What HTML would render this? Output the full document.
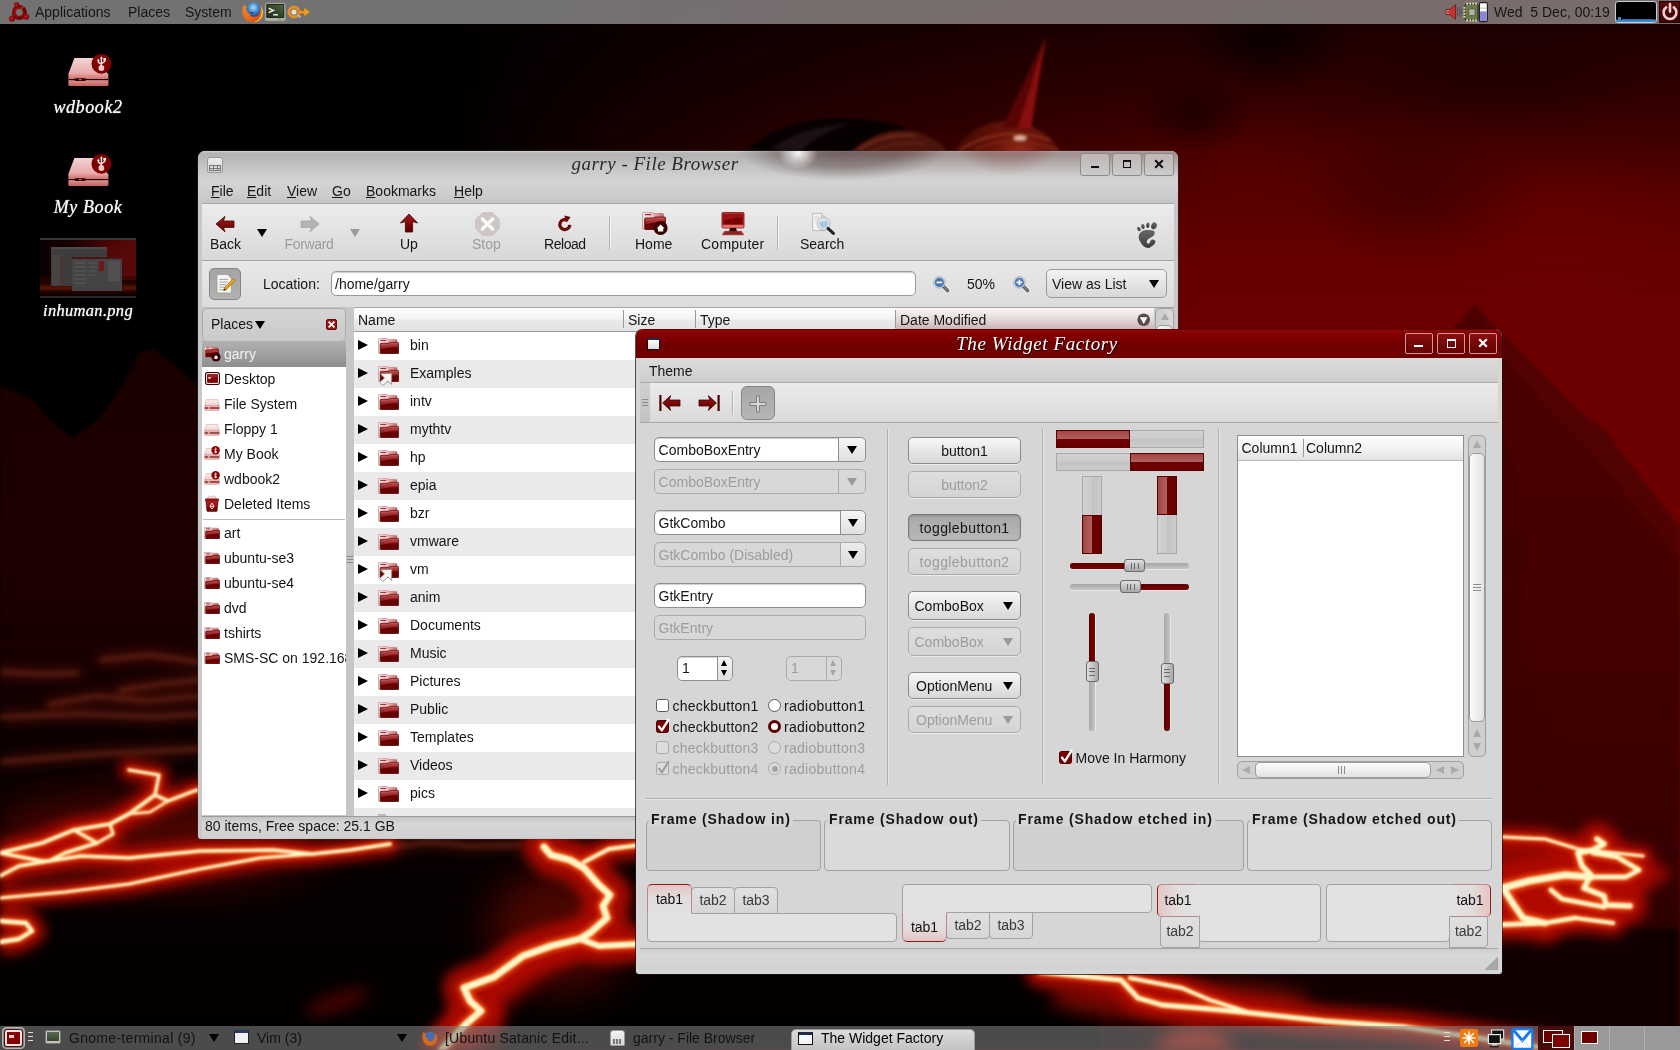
<!DOCTYPE html>
<html>
<head>
<meta charset="utf-8">
<title>desktop</title>
<style>
*{box-sizing:border-box;margin:0;padding:0}
html,body{width:1680px;height:1050px;overflow:hidden;background:#000}
body{font-family:"Liberation Sans",sans-serif;font-size:14px;color:#111;position:relative}
.abs{position:absolute}
svg{display:block}
#wall{position:absolute;left:0;top:0;width:1680px;height:1050px;overflow:hidden;background:#050000}
#wall svg{position:absolute;left:0;top:0}
.t{position:absolute;white-space:nowrap;line-height:1}
#tp{position:absolute;left:0;top:0;width:1680px;height:24px;background:linear-gradient(90deg,transparent 500px,rgba(130,60,60,.1) 900px),rgba(152,152,152,.75);box-shadow:0 1px 0 rgba(20,0,0,.6)}
#tp .t{top:5px;font-size:14px;color:#151515}
#bp{position:absolute;left:0;top:1026px;width:1680px;height:24px;background:rgba(125,125,125,.6)}
#bp .t{top:5px;font-size:14px;color:#121212}
.tri{position:absolute;width:0;height:0;border-left:5px solid transparent;border-right:5px solid transparent;border-top:8.5px solid #000}
.dlabel{position:absolute;text-align:center;font-family:"Liberation Serif",serif;font-style:italic;font-size:18px;color:#f4f4f4;letter-spacing:.6px;line-height:1;white-space:nowrap;text-shadow:0 0 1px #fff}
#fb{position:absolute;width:980px;height:688px;background:#c8c8c8;border-radius:7px 7px 3px 3px;box-shadow:0 0 0 .5px rgba(60,60,60,.6)}
#fb .t{color:#151515}
.wtitle{position:absolute;text-align:center;font-family:"Liberation Serif",serif;font-style:italic;font-size:19px;letter-spacing:.8px;line-height:1;white-space:nowrap}
.tbtn{position:absolute;width:30px;height:23px;border:1px solid #8a8a8a;border-radius:3px;background:linear-gradient(rgba(255,255,255,.35),rgba(255,255,255,.05))}
.mi{font-size:14px}
.tl{font-size:14px}
#fb .dis{color:#9c9c9c}
#wf{position:absolute;width:866px;height:645px;background:#d6d6d6;border-radius:7px 7px 3px 3px;box-shadow:-1px 0 0 rgba(30,20,20,.75),1px 0 0 rgba(30,20,20,.6),0 1px 0 rgba(30,20,20,.75)}
#wf .t{color:#151515}
#wf .dis{color:#9c9c9c}
.ent{position:absolute;border-radius:5px;background:#fff;border:1px solid #8e8e8e;box-shadow:inset 0 1px 1px #d0d0d0}
.ent.dis{background:#d8d8d8;border-color:#aaa;box-shadow:none}
.btn{position:absolute;border-radius:5px;background:linear-gradient(#f8f8f8,#e6e6e6 50%,#d8d8d8);border:1px solid #8a8a8a;box-shadow:0 1px 0 rgba(255,255,255,.5)}
.btn.dis{background:linear-gradient(#dedede,#d4d4d4);border-color:#aaa}
.btn.prs{background:linear-gradient(#a8a8a8,#b8b8b8);border-color:#7a7a7a;box-shadow:inset 0 1px 2px rgba(0,0,0,.2)}
#fb,#wf,#tp,#bp,.dlabel{will-change:transform}

</style>
</head>
<body>
<div id="wall">
<div class="abs" style="left:0;top:0;width:1680px;height:1050px;background:
linear-gradient(90deg,#000 0,#000 440px,rgba(0,0,0,.62) 650px,rgba(0,0,0,.34) 850px,rgba(0,0,0,.12) 1050px,transparent 1220px),
radial-gradient(ellipse 90px 50px at 1270px 40px,rgba(0,0,0,.7),transparent 100%),
radial-gradient(ellipse 60px 40px at 1195px 115px,rgba(0,0,0,.45),transparent 100%),
radial-gradient(ellipse 160px 60px at 1500px 80px,rgba(10,0,0,.35),transparent 100%),
radial-gradient(ellipse 120px 70px at 1420px 200px,rgba(20,0,0,.3),transparent 100%),
radial-gradient(ellipse 140px 60px at 1250px 160px,rgba(110,0,0,.3),transparent 100%),
radial-gradient(ellipse 200px 80px at 1560px 215px,rgba(120,0,0,.3),transparent 100%),
linear-gradient(180deg,#1a0000 0,#1e0000 24px,#2c0000 80px,#400000 140px,#560000 200px,#660000 260px,#6c0000 330px,#6c0000 1050px)"></div>
<svg width="1680" height="1050" viewBox="0 0 1680 1050" style="filter:blur(1.5px)">
<defs>
<linearGradient id="mtl" x1="0" y1="0" x2="0" y2="1"><stop offset="0" stop-color="#190000"/><stop offset=".6" stop-color="#1f0000"/><stop offset="1" stop-color="#120000"/></linearGradient>
<linearGradient id="mtr" x1="0" y1="0" x2="0" y2="1"><stop offset="0" stop-color="#4c0000"/><stop offset=".5" stop-color="#440000"/><stop offset=".85" stop-color="#380000"/><stop offset="1" stop-color="#2a0000"/></linearGradient>
<linearGradient id="gnd" x1="0" y1="0" x2="0" y2="1"><stop offset="0" stop-color="#1a0000"/><stop offset=".3" stop-color="#0a0000"/><stop offset="1" stop-color="#020000"/></linearGradient>
<radialGradient id="sph" cx=".6" cy=".28" r=".75"><stop offset="0" stop-color="#9a3020"/><stop offset=".25" stop-color="#6a1408"/><stop offset="1" stop-color="#260000"/></radialGradient>
</defs>
<path d="M-10 384 L0 387 L21 394 L34 401 L48 419 L72 438 L99 419 L120 389 L141 351 L154 349 L178 368 L197 385 L240 430 L300 480 L420 570 L560 650 L640 700 L-10 700 Z" fill="url(#mtl)"/>
<path d="M-10 640 L700 640 L1400 800 L1500 930 L1690 932 L1690 1060 L-10 1060 Z" fill="url(#gnd)"/>
<path d="M1340 470 L1420 380 L1452 330 L1475 304 L1500 330 L1525 356 L1568 400 L1607 433 L1640 477 L1690 540 L1690 940 L1490 940 L1340 800 Z" fill="url(#mtr)"/>
<path d="M1475 304 L1525 356 L1568 400 L1607 433 L1640 477 L1690 540 L1690 570 L1630 500 L1590 450 L1540 400 L1500 350Z" fill="#5a0404" opacity=".5"/><path d="M1500 420 L1530 520 L1520 640 L1560 760 L1540 800 L1505 700Z" fill="#3a0000" opacity=".35"/>
<path d="M1100 975 L1495 928 L1700 928 L1700 1060 L1100 1060Z" fill="#120000"/>
<path d="M730 175 Q750 128 828 118 Q905 116 948 150 L948 200 L730 200 Z" fill="#070000"/>
<path d="M770 150 Q800 126 850 124 Q820 132 800 152Z" fill="#1c1014"/>
<path d="M850 152 Q880 126 915 131 Q940 140 948 152 L948 170 L850 170Z" fill="#4a140c"/>
<path d="M858 150 Q885 132 915 136" fill="none" stroke="#8a3a20" stroke-width="2" opacity=".7"/>
<path d="M870 152 Q895 140 925 144" fill="none" stroke="#7a2a18" stroke-width="1.6" opacity=".7"/>
<circle cx="1007" cy="183" r="62" fill="url(#sph)"/>
<path d="M960 150 Q1000 124 1050 140" fill="none" stroke="#a04428" stroke-width="2.4" opacity=".6"/>
<path d="M975 150 Q1010 132 1058 150" fill="none" stroke="#8a3420" stroke-width="2" opacity=".6"/>
<ellipse cx="1020" cy="138" rx="7" ry="3" fill="#ffe0d0" opacity=".75"/>
<path d="M1002 128 L1046 36 L1031 128 Z" fill="#580404"/>
<path d="M1018 128 L1046 36 L1031 128 Z" fill="#8a0e0e"/>
<path d="M1132 972 L1142 972 L1153 1006 Z" fill="#3a2a2a"/>
</svg>
<svg width="1680" height="1050" viewBox="0 0 1680 1050" style="filter:blur(20px)">
<ellipse cx="150" cy="840" rx="170" ry="45" fill="#5a0600" opacity=".8"/>
<ellipse cx="560" cy="930" rx="70" ry="60" fill="#6a0800" opacity=".7"/>
</svg>
<svg width="1680" height="1050" viewBox="0 0 1680 1050" style="filter:blur(8px)">
<path d="M1500 830 L1680 800 L1680 1050 L1500 1050 Z" fill="#160000" opacity=".0"/>
<ellipse cx="1180" cy="1000" rx="130" ry="20" fill="#7a0a00" opacity=".8"/>
<ellipse cx="1195" cy="1052" rx="40" ry="22" fill="#e01808"/>
<path d="M425 1060 L455 1002 L500 965 L560 940 L580 950 L535 985 L505 1010 L495 1060Z" fill="#8a0600" opacity=".9"/>
<ellipse cx="338" cy="1002" rx="34" ry="7" fill="#6a0500" opacity=".8" transform="rotate(-18 338 1002)"/>
<path d="M1040 985 L1150 985 L1260 1000 L1330 1030 L1200 1025 L1100 1010Z" fill="#7a0600" opacity=".8"/>
<path d="M1495 860 L1560 850 L1610 860 L1625 890 L1590 915 L1495 920 Z" fill="#b01000"/>
</svg>
<svg width="1680" height="1050" viewBox="0 0 1680 1050" style="filter:blur(6px)">
<path d="M0 845 L74 825 L129 808 L160 790 L194 788 L170 805 L130 830 L100 850 L200 848 L200 858 L60 872 L0 884Z" fill="#7a0800" opacity=".85"/>
<path d="M1495 833 L1567 839 L1600 838 L1621 850 L1665 866 L1672 875 L1632 905 L1621 923 L1578 927 L1495 931 Z" fill="#8a0500"/>
<polyline points="0,672 40,674 78,673" fill="none" stroke="#5a1208" stroke-width="7" stroke-linejoin="round" stroke-linecap="round" opacity="1"/>
<polyline points="49,704 97,696 146,701 200,696" fill="none" stroke="#5a1208" stroke-width="7" stroke-linejoin="round" stroke-linecap="round" opacity="1"/>
<polyline points="0,717 81,714 155,717 200,714" fill="none" stroke="#5a1208" stroke-width="7" stroke-linejoin="round" stroke-linecap="round" opacity="1"/>
<polyline points="0,762 97,754 200,749" fill="none" stroke="#5a1208" stroke-width="7" stroke-linejoin="round" stroke-linecap="round" opacity="1"/>
<polyline points="100,660 150,655 200,662" fill="none" stroke="#5a1208" stroke-width="7" stroke-linejoin="round" stroke-linecap="round" opacity="1"/>
<polyline points="120,690 160,684 200,680" fill="none" stroke="#5a1208" stroke-width="7" stroke-linejoin="round" stroke-linecap="round" opacity="1"/>
<polyline points="380,851 399,846 430,842 470,846 520,845" fill="none" stroke="#5a1208" stroke-width="7" stroke-linejoin="round" stroke-linecap="round" opacity="1"/>
<polyline points="129,770 159,775 155,795 168,801 194,791 215,786" fill="none" stroke="#b00a00" stroke-width="20.2" stroke-linejoin="round" stroke-linecap="round" opacity="0.9"/>
<polyline points="155,795 129,814 110,824 74,830 42,843 0,853" fill="none" stroke="#b00a00" stroke-width="23.0" stroke-linejoin="round" stroke-linecap="round" opacity="0.9"/>
<polyline points="74,830 97,843 65,853 49,861 19,866 0,876" fill="none" stroke="#b00a00" stroke-width="21.6" stroke-linejoin="round" stroke-linecap="round" opacity="0.9"/>
<polyline points="110,824 113,834 97,843" fill="none" stroke="#b00a00" stroke-width="18.799999999999997" stroke-linejoin="round" stroke-linecap="round" opacity="0.9"/>
<polyline points="0,853 42,861 49,861 81,856 129,858 200,851 273,850 312,854 350,850 390,844" fill="none" stroke="#b00a00" stroke-width="21.6" stroke-linejoin="round" stroke-linecap="round" opacity="0.9"/>
<polyline points="0,898 65,892 129,884 200,869 260,858 312,854" fill="none" stroke="#b00a00" stroke-width="20.2" stroke-linejoin="round" stroke-linecap="round" opacity="0.9"/>
<polyline points="0,921 26,923 32,931 19,939 0,942" fill="none" stroke="#b00a00" stroke-width="27.0" stroke-linejoin="round" stroke-linecap="round" opacity="0.9"/>
<polyline points="129,814 150,812 168,801" fill="none" stroke="#b00a00" stroke-width="16.200000000000003" stroke-linejoin="round" stroke-linecap="round" opacity="0.9"/>
<polyline points="544,847 551,855 570,860 584,868 599,885 610,895 603,906 607,918 590,933 580,939 551,946 523,956 494,977 464,988 470,1001 481,1011 466,1024 440,1052" fill="none" stroke="#b00a00" stroke-width="42.0" stroke-linejoin="round" stroke-linecap="round" opacity="0.9"/>
<polyline points="584,862 609,849 640,845" fill="none" stroke="#b00a00" stroke-width="26.0" stroke-linejoin="round" stroke-linecap="round" opacity="0.9"/>
<polyline points="580,939 599,946 640,944" fill="none" stroke="#b00a00" stroke-width="36.0" stroke-linejoin="round" stroke-linecap="round" opacity="0.9"/>
<polyline points="1040,972 1081,976 1121,980 1138,998 1162,1005 1210,1009 1251,1013 1324,1021 1405,1027 1445,1033 1538,1047 1560,1052" fill="none" stroke="#b00a00" stroke-width="30.0" stroke-linejoin="round" stroke-linecap="round" opacity="0.9"/>
<polyline points="1130,978 1182,988 1210,1000 1251,1013" fill="none" stroke="#b00a00" stroke-width="24.0" stroke-linejoin="round" stroke-linecap="round" opacity="0.9"/>
<polyline points="1503,837 1545,839 1578,849 1643,856" fill="none" stroke="#b00a00" stroke-width="20.0" stroke-linejoin="round" stroke-linecap="round" opacity="0.9"/>
<polyline points="1597,839 1604,844 1593,850 1578,853 1582,866 1591,875 1584,888 1604,896 1606,905 1630,906" fill="none" stroke="#b00a00" stroke-width="34.0" stroke-linejoin="round" stroke-linecap="round" opacity="0.9"/>
<polyline points="1593,853 1617,857 1639,870 1626,877 1595,877" fill="none" stroke="#b00a00" stroke-width="30.0" stroke-linejoin="round" stroke-linecap="round" opacity="0.9"/>
<polyline points="1495,890 1529,881 1565,875 1591,877" fill="none" stroke="#b00a00" stroke-width="44.0" stroke-linejoin="round" stroke-linecap="round" opacity="0.9"/>
<polyline points="1503,888 1514,905 1523,918 1545,923" fill="none" stroke="#b00a00" stroke-width="40.0" stroke-linejoin="round" stroke-linecap="round" opacity="0.9"/>
<polyline points="1551,890 1562,899 1604,907" fill="none" stroke="#b00a00" stroke-width="30.0" stroke-linejoin="round" stroke-linecap="round" opacity="0.9"/>
<polyline points="1575,918 1613,923" fill="none" stroke="#b00a00" stroke-width="26.0" stroke-linejoin="round" stroke-linecap="round" opacity="0.9"/>
<polyline points="1495,925 1545,923 1575,918" fill="none" stroke="#b00a00" stroke-width="30.0" stroke-linejoin="round" stroke-linecap="round" opacity="0.9"/>
</svg>
<svg width="1680" height="1050" viewBox="0 0 1680 1050" style="filter:blur(2.5px)">
<polyline points="0,672 40,674 78,673" fill="none" stroke="#8a3a28" stroke-width="2" stroke-linejoin="round" stroke-linecap="round" opacity="0.8"/>
<polyline points="49,704 97,696 146,701 200,696" fill="none" stroke="#8a3a28" stroke-width="2" stroke-linejoin="round" stroke-linecap="round" opacity="0.8"/>
<polyline points="0,717 81,714 155,717 200,714" fill="none" stroke="#8a3a28" stroke-width="2" stroke-linejoin="round" stroke-linecap="round" opacity="0.8"/>
<polyline points="0,762 97,754 200,749" fill="none" stroke="#8a3a28" stroke-width="2" stroke-linejoin="round" stroke-linecap="round" opacity="0.8"/>
<polyline points="100,660 150,655 200,662" fill="none" stroke="#8a3a28" stroke-width="2" stroke-linejoin="round" stroke-linecap="round" opacity="0.8"/>
<polyline points="120,690 160,684 200,680" fill="none" stroke="#8a3a28" stroke-width="2" stroke-linejoin="round" stroke-linecap="round" opacity="0.8"/>
<polyline points="380,851 399,846 430,842 470,846 520,845" fill="none" stroke="#8a3a28" stroke-width="2" stroke-linejoin="round" stroke-linecap="round" opacity="0.8"/>
<polyline points="129,770 159,775 155,795 168,801 194,791 215,786" fill="none" stroke="#f4500e" stroke-width="5.656" stroke-linejoin="round" stroke-linecap="round" opacity="1"/>
<polyline points="155,795 129,814 110,824 74,830 42,843 0,853" fill="none" stroke="#f4500e" stroke-width="6.4399999999999995" stroke-linejoin="round" stroke-linecap="round" opacity="1"/>
<polyline points="74,830 97,843 65,853 49,861 19,866 0,876" fill="none" stroke="#f4500e" stroke-width="6.048" stroke-linejoin="round" stroke-linecap="round" opacity="1"/>
<polyline points="110,824 113,834 97,843" fill="none" stroke="#f4500e" stroke-width="5.263999999999999" stroke-linejoin="round" stroke-linecap="round" opacity="1"/>
<polyline points="0,853 42,861 49,861 81,856 129,858 200,851 273,850 312,854 350,850 390,844" fill="none" stroke="#f4500e" stroke-width="6.048" stroke-linejoin="round" stroke-linecap="round" opacity="1"/>
<polyline points="0,898 65,892 129,884 200,869 260,858 312,854" fill="none" stroke="#f4500e" stroke-width="5.656" stroke-linejoin="round" stroke-linecap="round" opacity="1"/>
<polyline points="0,921 26,923 32,931 19,939 0,942" fill="none" stroke="#f4500e" stroke-width="7.56" stroke-linejoin="round" stroke-linecap="round" opacity="1"/>
<polyline points="129,814 150,812 168,801" fill="none" stroke="#f4500e" stroke-width="4.536" stroke-linejoin="round" stroke-linecap="round" opacity="1"/>
<polyline points="544,847 551,855 570,860 584,868 599,885 610,895 603,906 607,918 590,933 580,939 551,946 523,956 494,977 464,988 470,1001 481,1011 466,1024 440,1052" fill="none" stroke="#f4500e" stroke-width="11.76" stroke-linejoin="round" stroke-linecap="round" opacity="1"/>
<polyline points="584,862 609,849 640,845" fill="none" stroke="#f4500e" stroke-width="7.279999999999999" stroke-linejoin="round" stroke-linecap="round" opacity="1"/>
<polyline points="580,939 599,946 640,944" fill="none" stroke="#f4500e" stroke-width="10.08" stroke-linejoin="round" stroke-linecap="round" opacity="1"/>
<polyline points="1040,972 1081,976 1121,980 1138,998 1162,1005 1210,1009 1251,1013 1324,1021 1405,1027 1445,1033 1538,1047 1560,1052" fill="none" stroke="#f4500e" stroke-width="8.399999999999999" stroke-linejoin="round" stroke-linecap="round" opacity="1"/>
<polyline points="1130,978 1182,988 1210,1000 1251,1013" fill="none" stroke="#f4500e" stroke-width="6.72" stroke-linejoin="round" stroke-linecap="round" opacity="1"/>
<polyline points="1503,837 1545,839 1578,849 1643,856" fill="none" stroke="#f4500e" stroke-width="5.6" stroke-linejoin="round" stroke-linecap="round" opacity="1"/>
<polyline points="1597,839 1604,844 1593,850 1578,853 1582,866 1591,875 1584,888 1604,896 1606,905 1630,906" fill="none" stroke="#f4500e" stroke-width="9.52" stroke-linejoin="round" stroke-linecap="round" opacity="1"/>
<polyline points="1593,853 1617,857 1639,870 1626,877 1595,877" fill="none" stroke="#f4500e" stroke-width="8.399999999999999" stroke-linejoin="round" stroke-linecap="round" opacity="1"/>
<polyline points="1495,890 1529,881 1565,875 1591,877" fill="none" stroke="#f4500e" stroke-width="12.32" stroke-linejoin="round" stroke-linecap="round" opacity="1"/>
<polyline points="1503,888 1514,905 1523,918 1545,923" fill="none" stroke="#f4500e" stroke-width="11.2" stroke-linejoin="round" stroke-linecap="round" opacity="1"/>
<polyline points="1551,890 1562,899 1604,907" fill="none" stroke="#f4500e" stroke-width="8.399999999999999" stroke-linejoin="round" stroke-linecap="round" opacity="1"/>
<polyline points="1575,918 1613,923" fill="none" stroke="#f4500e" stroke-width="7.279999999999999" stroke-linejoin="round" stroke-linecap="round" opacity="1"/>
<polyline points="1495,925 1545,923 1575,918" fill="none" stroke="#f4500e" stroke-width="8.399999999999999" stroke-linejoin="round" stroke-linecap="round" opacity="1"/>
</svg>
<svg width="1680" height="1050" viewBox="0 0 1680 1050" style="filter:blur(1.1px)">
<polyline points="129,770 159,775 155,795 168,801 194,791 215,786" fill="none" stroke="#fff6c4" stroke-width="3.232" stroke-linejoin="round" stroke-linecap="round" opacity="1"/>
<polyline points="155,795 129,814 110,824 74,830 42,843 0,853" fill="none" stroke="#fff6c4" stroke-width="3.6799999999999997" stroke-linejoin="round" stroke-linecap="round" opacity="1"/>
<polyline points="74,830 97,843 65,853 49,861 19,866 0,876" fill="none" stroke="#fff6c4" stroke-width="3.4560000000000004" stroke-linejoin="round" stroke-linecap="round" opacity="1"/>
<polyline points="110,824 113,834 97,843" fill="none" stroke="#fff6c4" stroke-width="3.008" stroke-linejoin="round" stroke-linecap="round" opacity="1"/>
<polyline points="0,853 42,861 49,861 81,856 129,858 200,851 273,850 312,854 350,850 390,844" fill="none" stroke="#fff6c4" stroke-width="3.4560000000000004" stroke-linejoin="round" stroke-linecap="round" opacity="1"/>
<polyline points="0,898 65,892 129,884 200,869 260,858 312,854" fill="none" stroke="#fff6c4" stroke-width="3.232" stroke-linejoin="round" stroke-linecap="round" opacity="1"/>
<polyline points="0,921 26,923 32,931 19,939 0,942" fill="none" stroke="#fff6c4" stroke-width="4.32" stroke-linejoin="round" stroke-linecap="round" opacity="1"/>
<polyline points="129,814 150,812 168,801" fill="none" stroke="#fff6c4" stroke-width="2.5920000000000005" stroke-linejoin="round" stroke-linecap="round" opacity="1"/>
<polyline points="544,847 551,855 570,860 584,868 599,885 610,895 603,906 607,918 590,933 580,939 551,946 523,956 494,977 464,988 470,1001 481,1011 466,1024 440,1052" fill="none" stroke="#fff6c4" stroke-width="6.720000000000001" stroke-linejoin="round" stroke-linecap="round" opacity="1"/>
<polyline points="584,862 609,849 640,845" fill="none" stroke="#fff6c4" stroke-width="4.16" stroke-linejoin="round" stroke-linecap="round" opacity="1"/>
<polyline points="580,939 599,946 640,944" fill="none" stroke="#fff6c4" stroke-width="5.760000000000001" stroke-linejoin="round" stroke-linecap="round" opacity="1"/>
<polyline points="1040,972 1081,976 1121,980 1138,998 1162,1005 1210,1009 1251,1013 1324,1021 1405,1027 1445,1033 1538,1047 1560,1052" fill="none" stroke="#fff6c4" stroke-width="4.800000000000001" stroke-linejoin="round" stroke-linecap="round" opacity="1"/>
<polyline points="1130,978 1182,988 1210,1000 1251,1013" fill="none" stroke="#fff6c4" stroke-width="3.84" stroke-linejoin="round" stroke-linecap="round" opacity="1"/>
<polyline points="1503,837 1545,839 1578,849 1643,856" fill="none" stroke="#fff6c4" stroke-width="3.2" stroke-linejoin="round" stroke-linecap="round" opacity="1"/>
<polyline points="1597,839 1604,844 1593,850 1578,853 1582,866 1591,875 1584,888 1604,896 1606,905 1630,906" fill="none" stroke="#fff6c4" stroke-width="5.44" stroke-linejoin="round" stroke-linecap="round" opacity="1"/>
<polyline points="1593,853 1617,857 1639,870 1626,877 1595,877" fill="none" stroke="#fff6c4" stroke-width="4.800000000000001" stroke-linejoin="round" stroke-linecap="round" opacity="1"/>
<polyline points="1495,890 1529,881 1565,875 1591,877" fill="none" stroke="#fff6c4" stroke-width="7.040000000000001" stroke-linejoin="round" stroke-linecap="round" opacity="1"/>
<polyline points="1503,888 1514,905 1523,918 1545,923" fill="none" stroke="#fff6c4" stroke-width="6.4" stroke-linejoin="round" stroke-linecap="round" opacity="1"/>
<polyline points="1551,890 1562,899 1604,907" fill="none" stroke="#fff6c4" stroke-width="4.800000000000001" stroke-linejoin="round" stroke-linecap="round" opacity="1"/>
<polyline points="1575,918 1613,923" fill="none" stroke="#fff6c4" stroke-width="4.16" stroke-linejoin="round" stroke-linecap="round" opacity="1"/>
<polyline points="1495,925 1545,923 1575,918" fill="none" stroke="#fff6c4" stroke-width="4.800000000000001" stroke-linejoin="round" stroke-linecap="round" opacity="1"/>
</svg>

</div>
<svg width="0" height="0" style="position:absolute"><defs>
<linearGradient id="drvT" x1="0" y1="0" x2="0" y2="1"><stop offset="0" stop-color="#f4d4d4"/><stop offset="1" stop-color="#e8a8a8"/></linearGradient>
<linearGradient id="drvB" x1="0" y1="0" x2="0" y2="1"><stop offset="0" stop-color="#e8a4a4"/><stop offset=".45" stop-color="#d07070"/><stop offset=".55" stop-color="#e09090"/><stop offset="1" stop-color="#c46060"/></linearGradient>
<symbol id="usbdrv" viewBox="0 0 48 36">
<path d="M8.4 4 H35 L41.4 20 H2.4 Z" fill="url(#drvT)"/>
<rect x="2.4" y="19.6" width="40" height="12.4" rx="1" fill="url(#drvB)"/>
<rect x="2.4" y="25" width="40" height="1.2" fill="#1a0000"/>
<rect x="8.4" y="24.2" width="11.6" height="2.8" rx="1.4" fill="#1a0000"/>
<rect x="13" y="25" width="2.4" height="1.2" fill="#ff6060"/>
<circle cx="35.4" cy="9.8" r="9.9" fill="#7e0000"/>
<circle cx="35.4" cy="14" r="2.9" fill="#f4c8c8"/>
<path d="M35.4 13 V3.4 M35.4 10.4 L32.4 8.4 V6.6 M35.4 9.6 L38.6 7.6 V5.8" stroke="#f8e0e0" stroke-width="1.3" fill="none"/>
<path d="M34 4.4 L35.4 2.2 L36.8 4.4Z" fill="#fff"/><rect x="37.4" y="4" width="2.6" height="2.6" fill="#fff"/><circle cx="32.4" cy="6.4" r="1.1" fill="#fff"/>
</symbol></defs></svg>
<svg class="abs" style="left:66px;top:54px" width="48" height="36"><use href="#usbdrv"/></svg>
<span class="dlabel" style="left:38px;top:98px;width:100px">wdbook2</span>
<svg class="abs" style="left:66px;top:154px" width="48" height="36"><use href="#usbdrv"/></svg>
<span class="dlabel" style="left:38px;top:198px;width:100px">My Book</span>
<!-- thumbnail -->
<div class="abs" style="left:40px;top:238px;width:96px;height:60px;overflow:hidden;background:linear-gradient(90deg,#0a0000 0,#1a0000 35%,#4a0505 70%,#5a0808 100%)">
 <div class="abs" style="left:0;top:0;width:96px;height:2px;background:#3a3434"></div>
 <div class="abs" style="left:0;top:58px;width:96px;height:2px;background:#2a2626"></div>
 <div class="abs" style="left:0;top:38px;width:96px;height:20px;background:linear-gradient(#160000,#2a0400 40%,#5a1606 60%,#200300 80%,#0a0000)"></div>
 <div class="abs" style="left:60px;top:8px;width:36px;height:34px;background:#5a0a0a;opacity:.6"></div>
 <div class="abs" style="left:11px;top:9px;width:56px;height:39px;background:#3e3c3c;border-top:2px solid #4c4a4a"></div>
 <div class="abs" style="left:12px;top:17px;width:8px;height:30px;background:#464444"></div>
 <div class="abs" style="left:21px;top:17px;width:1px;height:30px;background:#6a2a2a"></div>
 <div class="abs" style="left:32px;top:19px;width:50px;height:34px;background:#454343;border-top:2px solid #4a1414"></div>
 <div class="abs" style="left:34px;top:24px;width:12px;height:22px;background:repeating-linear-gradient(#504e4e 0,#504e4e 2px,#454343 2px,#454343 4px)"></div>
 <div class="abs" style="left:49px;top:24px;width:8px;height:14px;background:repeating-linear-gradient(#504e4e 0,#504e4e 2px,#454343 2px,#454343 4px)"></div>
 <div class="abs" style="left:59px;top:23px;width:5px;height:10px;background:#6a1a1a"></div>
 <div class="abs" style="left:68px;top:23px;width:12px;height:20px;background:#525050"></div>
</div>
<span class="dlabel" style="left:33px;top:303px;width:110px;font-size:16.5px;letter-spacing:.3px">inhuman.png</span>

<svg width="0" height="0" style="position:absolute"><defs>
<linearGradient id="fldF" x1="0" y1="0" x2="0" y2="1"><stop offset="0" stop-color="#b42828"/><stop offset=".4" stop-color="#8c0c0c"/><stop offset=".55" stop-color="#640000"/><stop offset="1" stop-color="#6e0404"/></linearGradient>
<linearGradient id="fldB" x1="0" y1="0" x2="1" y2=".3"><stop offset="0" stop-color="#fff4f4"/><stop offset=".45" stop-color="#f4c4c4"/><stop offset="1" stop-color="#c85a5a"/></linearGradient>
<symbol id="fold" viewBox="0 0 21 16">
<path d="M.4 1.2 Q.4 .3 1.3 .3 H9 L10.4 1.4 H18 Q19 1.4 19 2.4 V15.2 H.4Z" fill="url(#fldB)" stroke="#9a6a6a" stroke-width=".5"/>
<rect x="2.3" y="1.9" width="5.7" height=".9" fill="#7a1010"/>
<path d="M2.2 6.2 Q2.2 5.3 3.1 5.3 H10.4 L11.4 4.4 H19.8 Q20.8 4.4 20.8 5.4 V14.7 Q20.8 15.7 19.8 15.7 H3.2 Q2.2 15.7 2.2 14.7Z" fill="url(#fldF)" stroke="#4a0000" stroke-width=".6"/>
<path d="M3 6.2 H10.8 L11.8 5.3 H20 V8.2 Q11 8.6 3 11Z" fill="#fff" opacity=".14"/>
<path d="M3 6.3 H10.6 L11.6 5.4 H20" fill="none" stroke="#e08080" stroke-width=".5" opacity=".8"/>
</symbol>
<symbol id="foldlnk" viewBox="0 0 21 20">
<use href="#fold" x="0" y="0" width="21" height="16"/>
<path d="M2.4 7.8 L13.8 7.2 L13.6 18.4 L9.8 15.2 L4.8 19.6 L1.6 16.4 L6.4 12Z" fill="#f4f4f0" stroke="#7a7a76" stroke-width=".7"/>
</symbol>
<symbol id="sfold" viewBox="0 0 16 12">
<path d="M.4 1 Q.4 .3 1.1 .3 H6.6 L7.6 1.2 H13.6 Q14.4 1.2 14.4 2 V11.4 H.4Z" fill="url(#fldB)" stroke="#9a6a6a" stroke-width=".5"/>
<rect x="1.8" y="1.5" width="4" height=".8" fill="#7a1010"/>
<path d="M1.7 4.7 Q1.7 4 2.4 4 H7.8 L8.6 3.3 H14.9 Q15.7 3.3 15.7 4.1 V10.9 Q15.7 11.7 14.9 11.7 H2.5 Q1.7 11.7 1.7 10.9Z" fill="url(#fldF)" stroke="#4a0000" stroke-width=".6"/>
<path d="M2.4 4.8 H8 L8.8 4.1 H15 V6.2 Q8 6.6 2.4 8.2Z" fill="#fff" opacity=".14"/>
</symbol>
<linearGradient id="drvs" x1="0" y1="0" x2="0" y2="1"><stop offset="0" stop-color="#fdf2f2"/><stop offset="1" stop-color="#f2caca"/></linearGradient>
<symbol id="sdrv" viewBox="0 0 16 12">
<path d="M2.4 .6 H13.6 L15.4 7 H.6Z" fill="url(#drvs)" stroke="#c89090" stroke-width=".5"/>
<rect x=".6" y="6.8" width="14.8" height="4.6" rx=".8" fill="#f0bcbc" stroke="#c88a8a" stroke-width=".5"/>
<rect x=".8" y="8.4" width="14.4" height="1.2" fill="#6a0808"/><rect x="4" y="8.4" width="2" height="1.2" fill="#f4d0d0"/>
</symbol>
<symbol id="susb" viewBox="0 0 16 14">
<use href="#sdrv" x="0" y="2" width="16" height="12"/>
<circle cx="11.6" cy="4.2" r="4.2" fill="#8a0000"/><circle cx="11.6" cy="6" r="1.3" fill="#f8d8d8"/><path d="M11.6 5.4 V1.4 M11.6 4.2 L10.2 3.2 M11.6 3.8 L13 2.8" stroke="#fff" stroke-width=".7" fill="none"/>
</symbol>
</defs></svg>
<div id="fb" style="left:198px;top:151px">
<div class="abs" style="left:0;top:0;width:980px;height:53px;border-radius:7px 7px 0 0;background:linear-gradient(#d4d4d4 0,#b4b4b4 2px,#b6b6b6 6px,#c4c4c4 15px,#cfcfcf 25px,#d3d3d3 33px,#cdcdcd 44px,#c4c4c4 52px)"></div>
<div class="abs" style="left:0;top:0;width:980px;height:30px;border-radius:7px 7px 0 0;overflow:hidden">
<div class="abs" style="left:560px;top:0;width:420px;height:28px;background:linear-gradient(rgba(100,30,30,.26),rgba(100,30,30,.12) 12px,transparent 26px);-webkit-mask-image:linear-gradient(90deg,transparent,#000 80px)"></div>
<div class="abs" style="left:536px;top:-40px;width:216px;height:70px;border-radius:50%;background:radial-gradient(ellipse 108px 35px at 50% 50%,rgba(40,20,20,.42),rgba(40,20,20,.3) 60%,transparent 100%)"></div>
<div class="abs" style="left:650px;top:-10px;width:100px;height:30px;background:radial-gradient(ellipse 50px 22px at 50% 0,rgba(120,40,30,.3),transparent 100%)"></div>
<div class="abs" style="left:578px;top:-6px;width:44px;height:30px;background:radial-gradient(ellipse 20px 17px at 50% 25%,rgba(255,255,255,.95),rgba(255,255,255,.5) 50%,transparent 100%)"></div>
<div class="abs" style="left:745px;top:-32px;width:128px;height:62px;background:radial-gradient(ellipse 64px 56px at 50% 0,rgba(120,50,40,.5),rgba(120,50,40,.25) 70%,transparent 100%)"></div>
</div>
<div class="abs" style="left:9px;top:6px;width:16px;height:16px;border:1px solid #999;border-radius:3px 3px 2px 2px;background:linear-gradient(#eee,#d4d4d4)"></div>
<div class="abs" style="left:11px;top:14px;width:12px;height:6px;background:#777"></div>
<div class="abs" style="left:12px;top:15px;width:10px;height:4px;background:repeating-linear-gradient(90deg,#ddd 0,#ddd 3px,#777 3px,#777 4px)"></div>
<div class="abs" style="left:12px;top:16.599999999999994px;width:10px;height:1px;background:#777"></div>
<span class="wtitle" style="left:342px;top:3px;width:230px;letter-spacing:.5px;color:#2a2a2a">garry - File Browser</span>
<div class="tbtn" style="left:882px;top:2px"></div>
<div class="tbtn" style="left:914px;top:2px"></div>
<div class="tbtn" style="left:946px;top:2px"></div>
<div class="abs" style="left:893px;top:15px;width:8px;height:2px;background:#111"></div>
<div class="abs" style="left:925px;top:9px;width:8px;height:8px;border:1px solid #111;border-top:2px solid #111"></div>
<svg class="abs" style="left:956px;top:8px" width="10" height="10" viewBox="0 0 10 10"><path d="M1.2 1.2 L8.8 8.8 M8.8 1.2 L1.2 8.8" stroke="#111" stroke-width="2"/></svg>
<span class="t mi" style="left:13px;top:33px"><u>F</u>ile</span>
<span class="t mi" style="left:49px;top:33px"><u>E</u>dit</span>
<span class="t mi" style="left:89px;top:33px"><u>V</u>iew</span>
<span class="t mi" style="left:134px;top:33px"><u>G</u>o</span>
<span class="t mi" style="left:168px;top:33px"><u>B</u>ookmarks</span>
<span class="t mi" style="left:256px;top:33px"><u>H</u>elp</span>
<div class="abs" style="left:4px;top:52px;width:972px;height:58px;background:linear-gradient(#ececec,#e0e0e0 60%,#d8d8d8);border-top:1px solid #a8a8a8;border-bottom:1px solid #a4a4a4"></div>
<svg class="abs" style="left:17px;top:64px" width="20" height="18" viewBox="0 0 20 18"><defs><linearGradient id="arR" x1="0" y1="0" x2="0" y2="1"><stop offset="0" stop-color="#a81818"/><stop offset="1" stop-color="#5a0000"/></linearGradient></defs><path d="M1 9 L10 1.4 L8.4 6 H19 V12.4 H8.4 L10 16.8Z" fill="url(#arR)" stroke="#4a0000" stroke-width=".8" stroke-linejoin="round"/></svg>
<span class="t tl" style="left:12px;top:86px">Back</span>
<div class="tri" style="left:59px;top:78px"></div>
<svg class="abs" style="left:102px;top:64px" width="20" height="18" viewBox="0 0 20 18"><path d="M19 9 L10 1.4 L11.6 6 H1 V12.4 H11.6 L10 16.8Z" fill="#b4b4b4" stroke="#a4a4a4" stroke-width=".8" stroke-linejoin="round"/></svg>
<span class="t tl dis" style="left:86.5px;top:86px;letter-spacing:-.35px">Forward</span>
<div class="tri" style="left:152px;top:78px;border-top-color:#999"></div>
<svg class="abs" style="left:201px;top:62px" width="20" height="20" viewBox="0 0 20 20"><path d="M10 1 L18.6 10 L13.6 8.6 V19 H6.4 V8.6 L1.4 10Z" fill="url(#arR)" stroke="#4a0000" stroke-width=".8" stroke-linejoin="round"/></svg>
<span class="t tl" style="left:202px;top:86px">Up</span>
<svg class="abs" style="left:277px;top:61px" width="25" height="24" viewBox="0 0 25 24"><path d="M7.6 .8 H17.4 L24.2 7.6 V16.4 L17.4 23.2 H7.6 L.8 16.4 V7.6Z" fill="#cfc6c6" stroke="#c4baba" stroke-width=".8"/><path d="M7.4 7 L17.6 17 M17.6 7 L7.4 17" stroke="#fafafa" stroke-width="3.6" stroke-linecap="round"/></svg>
<span class="t tl dis" style="left:274px;top:86px">Stop</span>
<svg class="abs" style="left:359px;top:63px" width="16" height="18" viewBox="0 0 16 18"><path d="M10.6 6.4 A5 5 0 1 0 12.8 10.8" fill="none" stroke="#6a0606" stroke-width="3.2"/><path d="M7.2 1.6 L13.6 3 L9.6 8.4Z" fill="#6a0606"/></svg>
<span class="t tl" style="left:346px;top:86px;letter-spacing:-.45px">Reload</span>
<div class="abs" style="left:411px;top:65px;width:1px;height:34px;background:#b4b4b4;box-shadow:1px 0 0 #f4f4f4"></div>
<svg class="abs" style="left:444px;top:61px" width="27" height="24" viewBox="0 0 27 24"><use href="#fold" x="0" y="0" width="24" height="18"/><circle cx="18.6" cy="16" r="7" fill="#3a0000"/><path d="M14.6 16.4 L18.6 12.6 L22.6 16.4 H21.2 V19.4 H16 V16.4Z" fill="#fff"/></svg>
<span class="t tl" style="left:437px;top:86px">Home</span>
<svg class="abs" style="left:523px;top:61px" width="24" height="24" viewBox="0 0 24 24"><rect x="1" y=".6" width="22" height="15.4" rx="1" fill="#c03030" stroke="#7a0a0a" stroke-width=".8"/><rect x="2.4" y="2" width="19.2" height="10.4" fill="#7a0000"/><path d="M2.4 2 H21.6 V6 Q12 5 2.4 9Z" fill="#a01818" opacity=".8"/><rect x="1.4" y="13.2" width="21.2" height="2.4" fill="#e07878"/><path d="M9 16 H15 L16 19.4 H8Z" fill="#3a0000"/><path d="M3.4 19.4 H20.6 L22.6 22.8 H1.4Z" fill="#c83a3a" stroke="#7a0a0a" stroke-width=".6"/><path d="M4.6 20.2 H19.4" stroke="#3a0000" stroke-width=".9" stroke-dasharray="1.2 .8"/><path d="M3.6 21.6 H20.4" stroke="#3a0000" stroke-width=".9" stroke-dasharray="1.2 .8"/></svg>
<span class="t tl" style="left:503px;top:86px;letter-spacing:.25px">Computer</span>
<div class="abs" style="left:579px;top:65px;width:1px;height:34px;background:#b4b4b4;box-shadow:1px 0 0 #f4f4f4"></div>
<svg class="abs" style="left:613px;top:61px" width="25" height="24" viewBox="0 0 25 24"><path d="M1.6 1.4 H10.6 L14.6 5.4 V18.6 H1.6Z" fill="#f2f2f2" stroke="#b0b0b0" stroke-width=".8"/><path d="M10.6 1.4 V5.4 H14.6" fill="#ddd" stroke="#b0b0b0" stroke-width=".6"/><path d="M3.6 4.6 H8.6 M3.6 6.6 H8 M3.6 8.6 H6" stroke="#ccc" stroke-width=".7"/><circle cx="12.6" cy="11.6" r="5.4" fill="#a8c8e4" stroke="#e8e8e8" stroke-width="2"/><circle cx="12.6" cy="11.6" r="6.4" fill="none" stroke="#9a9a9a" stroke-width=".6"/><path d="M10 9.6 Q12 7.6 14.6 9" stroke="#e8f4ff" stroke-width="1.2" fill="none"/><path d="M17 16.4 L22.4 21.4" stroke="#222" stroke-width="3" stroke-linecap="round"/></svg>
<span class="t tl" style="left:602px;top:86px">Search</span>
<svg class="abs" style="left:938px;top:70px" width="22" height="28" viewBox="0 0 22 28"><defs><linearGradient id="ftg" x1="0" y1="0" x2="0" y2="1"><stop offset="0" stop-color="#686868"/><stop offset="1" stop-color="#3c3c3c"/></linearGradient></defs><g fill="url(#ftg)"><ellipse cx="18" cy="4.8" rx="2.7" ry="3.5" transform="rotate(25 18 4.8)"/><ellipse cx="11.8" cy="4.3" rx="1.7" ry="2.7" transform="rotate(5 11.8 4.3)"/><ellipse cx="6.9" cy="5.5" rx="1.7" ry="2.5" transform="rotate(-12 6.9 5.5)"/><ellipse cx="2.9" cy="8" rx="1.6" ry="2.3" transform="rotate(-38 2.9 8)"/><path d="M2.7 15.6 C3 12 5.5 9.8 7.7 9.4 C10 9 12 9 13.2 9.1 C16 9.2 18.6 9.8 18.7 11.5 C18.8 13.6 17.6 14.8 16.3 15.6 C14.5 16.8 11.4 18 10.8 20 C10.4 21.6 11.4 22.8 12.5 22.8 C13.6 22.8 14 21 14.6 19.7 C15.2 18.6 16.6 18.2 17.7 18.7 C18.8 19.2 19.6 19.8 19.4 20.9 C19 23 17 24.6 15.3 25.4 C14 26.4 13 26.9 11.8 26.9 C9 26.9 6.8 24.6 5.3 22.4 C3.6 20 2.5 18 2.7 15.6Z"/></g></svg>
<div class="abs" style="left:4px;top:110px;width:972px;height:46px;background:linear-gradient(#e8e8e8,#dcdcdc)"></div>
<div class="abs" style="left:11px;top:117px;width:32px;height:32px;border-radius:5px;background:linear-gradient(#a4a4a4,#b2b2b2);border:1px solid #858585"></div>
<svg class="abs" style="left:17px;top:122px" width="22" height="22" viewBox="0 0 22 22"><path d="M2 1.6 H12.6 L16.4 5.2 V20 H2Z" fill="#f6f6f2" stroke="#9a9a96" stroke-width=".8"/><path d="M4.4 6.4 H13 M4.4 9 H13 M4.4 11.6 H11 M4.4 14.2 H10 M4.4 16.8 H12" stroke="#9a9a96" stroke-width=".9"/><path d="M18.6 5.4 L20.6 7.4 L11.4 16.4 L8.6 17.6 L9.6 14.6Z" fill="#f0a020" stroke="#a86a10" stroke-width=".7"/><path d="M8.6 17.6 L9.4 15.6 L10.8 16.8Z" fill="#222"/></svg>
<span class="t" style="left:65px;top:126px;font-size:14px">Location:</span>
<div class="abs" style="left:133px;top:120px;width:585px;height:25px;border-radius:5px;background:#fff;border:1px solid #9a9a9a;box-shadow:inset 0 1px 1px #ccc"></div>
<span class="t" style="left:137px;top:126px;font-size:14px">/home/garry</span>
<svg class="abs" style="left:735px;top:125px" width="17" height="17" viewBox="0 0 17 17"><path d="M9.6 9.6 L14.6 14.6" stroke="#555" stroke-width="3" stroke-linecap="round"/><path d="M11 11 L14.4 14.4" stroke="#999" stroke-width="1" stroke-linecap="round"/><circle cx="6.4" cy="6.4" r="5.2" fill="#4a78b8" stroke="#c8d0d8" stroke-width="1.2"/><circle cx="6.4" cy="6.4" r="5.9" fill="none" stroke="#8a98a8" stroke-width=".5"/><path d="M3.6 6.4 H9.2" stroke="#fff" stroke-width="1.8"/></svg>
<svg class="abs" style="left:815px;top:125px" width="17" height="17" viewBox="0 0 17 17"><path d="M9.6 9.6 L14.6 14.6" stroke="#555" stroke-width="3" stroke-linecap="round"/><path d="M11 11 L14.4 14.4" stroke="#999" stroke-width="1" stroke-linecap="round"/><circle cx="6.4" cy="6.4" r="5.2" fill="#4a78b8" stroke="#c8d0d8" stroke-width="1.2"/><circle cx="6.4" cy="6.4" r="5.9" fill="none" stroke="#8a98a8" stroke-width=".5"/><path d="M3.6 6.4 H9.2" stroke="#fff" stroke-width="1.8"/><path d="M6.4 3.6 V9.2" stroke="#fff" stroke-width="1.8"/></svg>
<span class="t" style="left:769px;top:126px;font-size:14px">50%</span>
<div class="abs" style="left:848px;top:118px;width:121px;height:29px;border-radius:5px;background:linear-gradient(#f4f4f4,#e4e4e4 50%,#d8d8d8);border:1px solid #9a9a9a"></div>
<span class="t" style="left:854px;top:126px;font-size:14px">View as List</span>
<div class="tri" style="left:951px;top:129px"></div>
<div class="abs" style="left:4px;top:156px;width:972px;height:509px;background:#c6c6c6"></div>
<div class="abs" style="left:4px;top:190px;width:144px;height:474px;background:#fff"></div>
<div class="abs" style="left:4px;top:156.5px;width:144px;height:34px;border-radius:5px;background:linear-gradient(#d4d4d4,#cacaca);border:1px solid #ababab"></div>
<span class="t" style="left:13px;top:166px;font-size:14px">Places</span>
<div class="tri" style="left:56.5px;top:169.5px"></div>
<div class="abs" style="left:127.5px;top:167.5px;width:11px;height:11px;background:#a01414;border:1px solid #6a0808;border-radius:2px"></div>
<svg class="abs" style="left:128.5px;top:168.5px" width="9" height="9" viewBox="0 0 9 9"><path d="M1.6 1.6 L7.4 7.4 M7.4 1.6 L1.6 7.4" stroke="#fff" stroke-width="1.8"/></svg>
<div class="abs" style="left:4px;top:190px;width:144px;height:26px;background:linear-gradient(#b2b2b2,#8e8e8e)"></div>
<svg class="abs" style="left:6px;top:194.7px" width="17" height="16" viewBox="0 0 17 16"><use href="#sfold" x="0" y="0" width="15" height="11.4"/><circle cx="12" cy="11" r="4.6" fill="#3a0000"/><path d="M9.6 11.6 L12 9.2 L14.4 11.6 L13.4 11.6 V13 H10.6 V11.6Z" fill="#fff"/></svg>
<span class="t" style="left:26px;top:195.7px;font-size:14px;color:#f2f2f2">garry</span>
<svg class="abs" style="left:7px;top:221.2px" width="15" height="13" viewBox="0 0 15 13"><rect x=".5" y=".5" width="14" height="12" rx="1.6" fill="#6a0000" stroke="#3a0000"/><rect x="1.6" y="1.6" width="11.8" height="9.8" rx="1" fill="none" stroke="#f4e4e4" stroke-width="1.1"/><rect x="2.6" y="2.6" width="9.8" height="7.8" fill="#7a0404"/><path d="M2.6 2.6 H12.4 V5 Q7 5 2.6 8Z" fill="#a02020"/><rect x="3.4" y="5" width="2.4" height="1.6" fill="#f8d8d8"/></svg>
<span class="t" style="left:26px;top:220.7px;font-size:14px">Desktop</span>
<svg class="abs" style="left:6px;top:247.7px" width="16" height="12"><use href="#sdrv"/></svg>
<span class="t" style="left:26px;top:245.7px;font-size:14px">File System</span>
<svg class="abs" style="left:6px;top:272.7px" width="16" height="12"><use href="#sdrv"/></svg>
<span class="t" style="left:26px;top:270.7px;font-size:14px">Floppy 1</span>
<svg class="abs" style="left:6px;top:294.7px" width="16" height="14"><use href="#susb"/></svg>
<span class="t" style="left:26px;top:295.7px;font-size:14px">My Book</span>
<svg class="abs" style="left:6px;top:319.7px" width="16" height="14"><use href="#susb"/></svg>
<span class="t" style="left:26px;top:320.7px;font-size:14px">wdbook2</span>
<svg class="abs" style="left:7px;top:344.2px" width="14" height="17" viewBox="0 0 14 17"><defs><linearGradient id="trg" x1="0" y1="0" x2="0" y2="1"><stop offset="0" stop-color="#c02424"/><stop offset="1" stop-color="#640000"/></linearGradient></defs><path d="M2.4 2.6 L4.4 .8 L6.4 2 L8.6 .6 L11 2.4 L11.6 4 H2Z" fill="#f4dada" stroke="#b88" stroke-width=".4"/><path d="M.8 4.6 H13.2 L12.2 15.6 Q12.2 16.4 11.4 16.4 H2.6 Q1.8 16.4 1.8 15.6Z" fill="url(#trg)" stroke="#5a0000" stroke-width=".6"/><path d="M.4 3.8 H13.6 V5.6 H.4Z" fill="#a81818" stroke="#5a0000" stroke-width=".4"/><path d="M7 8 L9 11.2 H5Z M5 11.2 L7 14 M9 11.2 L7 14" fill="none" stroke="#f8e0e0" stroke-width="1"/></svg>
<span class="t" style="left:26px;top:345.7px;font-size:14px">Deleted Items</span>
<div class="abs" style="left:5px;top:368px;width:142px;height:1px;background:#b8b8b8"></div>
<svg class="abs" style="left:6px;top:375.70000000000005px" width="16" height="12"><use href="#sfold"/></svg>
<span class="t" style="left:26px;top:374.70000000000005px;font-size:14px;width:122px;overflow:hidden">art</span>
<svg class="abs" style="left:6px;top:400.70000000000005px" width="16" height="12"><use href="#sfold"/></svg>
<span class="t" style="left:26px;top:399.70000000000005px;font-size:14px;width:122px;overflow:hidden">ubuntu-se3</span>
<svg class="abs" style="left:6px;top:425.70000000000005px" width="16" height="12"><use href="#sfold"/></svg>
<span class="t" style="left:26px;top:424.70000000000005px;font-size:14px;width:122px;overflow:hidden">ubuntu-se4</span>
<svg class="abs" style="left:6px;top:450.70000000000005px" width="16" height="12"><use href="#sfold"/></svg>
<span class="t" style="left:26px;top:449.70000000000005px;font-size:14px;width:122px;overflow:hidden">dvd</span>
<svg class="abs" style="left:6px;top:475.70000000000005px" width="16" height="12"><use href="#sfold"/></svg>
<span class="t" style="left:26px;top:474.70000000000005px;font-size:14px;width:122px;overflow:hidden">tshirts</span>
<svg class="abs" style="left:6px;top:500.70000000000005px" width="16" height="12"><use href="#sfold"/></svg>
<span class="t" style="left:26px;top:499.70000000000005px;font-size:14px;width:122px;overflow:hidden">SMS-SC on 192.168</span>
<div class="abs" style="left:149px;top:405px;width:6px;height:7px;background:repeating-linear-gradient(#888 0,#888 1px,transparent 1px,transparent 3px)"></div>
<div class="abs" style="left:156px;top:156px;width:800px;height:508.5px;background:#fff;overflow:hidden">
<div class="abs" style="left:0;top:25px;width:800px;height:28px;background:#fff"></div>
<div class="abs" style="left:4px;top:33px;width:0;height:0;border-top:5.5px solid transparent;border-bottom:5.5px solid transparent;border-left:10.5px solid #000"></div>
<svg class="abs" style="left:24px;top:31px" width="21" height="16"><use href="#fold"/></svg>
<span class="t" style="left:56px;top:31px;font-size:14px">bin</span>
<div class="abs" style="left:0;top:53px;width:800px;height:28px;background:#ebe9e9"></div>
<div class="abs" style="left:4px;top:61px;width:0;height:0;border-top:5.5px solid transparent;border-bottom:5.5px solid transparent;border-left:10.5px solid #000"></div>
<svg class="abs" style="left:24px;top:59px" width="21" height="20"><use href="#foldlnk"/></svg>
<span class="t" style="left:56px;top:59px;font-size:14px">Examples</span>
<div class="abs" style="left:0;top:81px;width:800px;height:28px;background:#fff"></div>
<div class="abs" style="left:4px;top:89px;width:0;height:0;border-top:5.5px solid transparent;border-bottom:5.5px solid transparent;border-left:10.5px solid #000"></div>
<svg class="abs" style="left:24px;top:87px" width="21" height="16"><use href="#fold"/></svg>
<span class="t" style="left:56px;top:87px;font-size:14px">intv</span>
<div class="abs" style="left:0;top:109px;width:800px;height:28px;background:#ebe9e9"></div>
<div class="abs" style="left:4px;top:117px;width:0;height:0;border-top:5.5px solid transparent;border-bottom:5.5px solid transparent;border-left:10.5px solid #000"></div>
<svg class="abs" style="left:24px;top:115px" width="21" height="16"><use href="#fold"/></svg>
<span class="t" style="left:56px;top:115px;font-size:14px">mythtv</span>
<div class="abs" style="left:0;top:137px;width:800px;height:28px;background:#fff"></div>
<div class="abs" style="left:4px;top:145px;width:0;height:0;border-top:5.5px solid transparent;border-bottom:5.5px solid transparent;border-left:10.5px solid #000"></div>
<svg class="abs" style="left:24px;top:143px" width="21" height="16"><use href="#fold"/></svg>
<span class="t" style="left:56px;top:143px;font-size:14px">hp</span>
<div class="abs" style="left:0;top:165px;width:800px;height:28px;background:#ebe9e9"></div>
<div class="abs" style="left:4px;top:173px;width:0;height:0;border-top:5.5px solid transparent;border-bottom:5.5px solid transparent;border-left:10.5px solid #000"></div>
<svg class="abs" style="left:24px;top:171px" width="21" height="16"><use href="#fold"/></svg>
<span class="t" style="left:56px;top:171px;font-size:14px">epia</span>
<div class="abs" style="left:0;top:193px;width:800px;height:28px;background:#fff"></div>
<div class="abs" style="left:4px;top:201px;width:0;height:0;border-top:5.5px solid transparent;border-bottom:5.5px solid transparent;border-left:10.5px solid #000"></div>
<svg class="abs" style="left:24px;top:199px" width="21" height="16"><use href="#fold"/></svg>
<span class="t" style="left:56px;top:199px;font-size:14px">bzr</span>
<div class="abs" style="left:0;top:221px;width:800px;height:28px;background:#ebe9e9"></div>
<div class="abs" style="left:4px;top:229px;width:0;height:0;border-top:5.5px solid transparent;border-bottom:5.5px solid transparent;border-left:10.5px solid #000"></div>
<svg class="abs" style="left:24px;top:227px" width="21" height="16"><use href="#fold"/></svg>
<span class="t" style="left:56px;top:227px;font-size:14px">vmware</span>
<div class="abs" style="left:0;top:249px;width:800px;height:28px;background:#fff"></div>
<div class="abs" style="left:4px;top:257px;width:0;height:0;border-top:5.5px solid transparent;border-bottom:5.5px solid transparent;border-left:10.5px solid #000"></div>
<svg class="abs" style="left:24px;top:255px" width="21" height="20"><use href="#foldlnk"/></svg>
<span class="t" style="left:56px;top:255px;font-size:14px">vm</span>
<div class="abs" style="left:0;top:277px;width:800px;height:28px;background:#ebe9e9"></div>
<div class="abs" style="left:4px;top:285px;width:0;height:0;border-top:5.5px solid transparent;border-bottom:5.5px solid transparent;border-left:10.5px solid #000"></div>
<svg class="abs" style="left:24px;top:283px" width="21" height="16"><use href="#fold"/></svg>
<span class="t" style="left:56px;top:283px;font-size:14px">anim</span>
<div class="abs" style="left:0;top:305px;width:800px;height:28px;background:#fff"></div>
<div class="abs" style="left:4px;top:313px;width:0;height:0;border-top:5.5px solid transparent;border-bottom:5.5px solid transparent;border-left:10.5px solid #000"></div>
<svg class="abs" style="left:24px;top:311px" width="21" height="16"><use href="#fold"/></svg>
<span class="t" style="left:56px;top:311px;font-size:14px">Documents</span>
<div class="abs" style="left:0;top:333px;width:800px;height:28px;background:#ebe9e9"></div>
<div class="abs" style="left:4px;top:341px;width:0;height:0;border-top:5.5px solid transparent;border-bottom:5.5px solid transparent;border-left:10.5px solid #000"></div>
<svg class="abs" style="left:24px;top:339px" width="21" height="16"><use href="#fold"/></svg>
<span class="t" style="left:56px;top:339px;font-size:14px">Music</span>
<div class="abs" style="left:0;top:361px;width:800px;height:28px;background:#fff"></div>
<div class="abs" style="left:4px;top:369px;width:0;height:0;border-top:5.5px solid transparent;border-bottom:5.5px solid transparent;border-left:10.5px solid #000"></div>
<svg class="abs" style="left:24px;top:367px" width="21" height="16"><use href="#fold"/></svg>
<span class="t" style="left:56px;top:367px;font-size:14px">Pictures</span>
<div class="abs" style="left:0;top:389px;width:800px;height:28px;background:#ebe9e9"></div>
<div class="abs" style="left:4px;top:397px;width:0;height:0;border-top:5.5px solid transparent;border-bottom:5.5px solid transparent;border-left:10.5px solid #000"></div>
<svg class="abs" style="left:24px;top:395px" width="21" height="16"><use href="#fold"/></svg>
<span class="t" style="left:56px;top:395px;font-size:14px">Public</span>
<div class="abs" style="left:0;top:417px;width:800px;height:28px;background:#fff"></div>
<div class="abs" style="left:4px;top:425px;width:0;height:0;border-top:5.5px solid transparent;border-bottom:5.5px solid transparent;border-left:10.5px solid #000"></div>
<svg class="abs" style="left:24px;top:423px" width="21" height="16"><use href="#fold"/></svg>
<span class="t" style="left:56px;top:423px;font-size:14px">Templates</span>
<div class="abs" style="left:0;top:445px;width:800px;height:28px;background:#ebe9e9"></div>
<div class="abs" style="left:4px;top:453px;width:0;height:0;border-top:5.5px solid transparent;border-bottom:5.5px solid transparent;border-left:10.5px solid #000"></div>
<svg class="abs" style="left:24px;top:451px" width="21" height="16"><use href="#fold"/></svg>
<span class="t" style="left:56px;top:451px;font-size:14px">Videos</span>
<div class="abs" style="left:0;top:473px;width:800px;height:28px;background:#fff"></div>
<div class="abs" style="left:4px;top:481px;width:0;height:0;border-top:5.5px solid transparent;border-bottom:5.5px solid transparent;border-left:10.5px solid #000"></div>
<svg class="abs" style="left:24px;top:479px" width="21" height="16"><use href="#fold"/></svg>
<span class="t" style="left:56px;top:479px;font-size:14px">pics</span>
<div class="abs" style="left:0;top:501px;width:800px;height:28px;background:#ebe9e9"></div>
<div class="abs" style="left:24px;top:507px;width:8px;height:2px;background:#bbb"></div>
<div class="abs" style="left:0;top:0;width:800px;height:25px;background:linear-gradient(#fdfdfd,#f4f4f4 45%,#e9e9e9 55%,#e2e2e2);border-top:1px solid #a6a6a6;border-bottom:1px solid #9c9c9c"></div>
<div class="abs" style="left:541px;top:0;width:259px;height:25px;background:linear-gradient(#fbf7f7,#e4d8d8 50%,#c4aeae);border-top:1px solid #a6a6a6;border-bottom:1px solid #9c8c8c"></div>
<div class="abs" style="left:269px;top:3px;width:1px;height:18px;background:#9a9a9a"></div>
<div class="abs" style="left:341px;top:3px;width:1px;height:18px;background:#9a9a9a"></div>
<div class="abs" style="left:541px;top:3px;width:1px;height:18px;background:#9a9a9a"></div>
<span class="t" style="left:4px;top:6px;font-size:14px">Name</span>
<span class="t" style="left:274px;top:6px;font-size:14px">Size</span>
<span class="t" style="left:346px;top:6px;font-size:14px">Type</span>
<span class="t" style="left:546px;top:6px;font-size:14px">Date Modified</span>
<svg class="abs" style="left:782.5px;top:5.5px" width="13.4" height="13.4" viewBox="0 0 14 14"><circle cx="7" cy="7" r="6.6" fill="#5a4a4a"/><path d="M3 4.4 H11 L7 11.4Z" fill="#fff"/></svg>
</div>
<div class="abs" style="left:957px;top:157px;width:19px;height:507px;border-radius:5px;background:linear-gradient(90deg,#cccccc,#dadada);border:1px solid #a0a0a0"></div>
<div class="abs" style="left:956px;top:156px;width:20px;height:1px;background:#a0a0a0"></div>
<div class="abs" style="left:962.5px;top:161.5px;width:0;height:0;border-left:4px solid transparent;border-right:4px solid transparent;border-bottom:7.5px solid #aaa"></div>
<div class="abs" style="left:958px;top:174px;width:17px;height:60px;border-radius:5px;background:linear-gradient(90deg,#f8f8f8,#e0e0e0);border:1px solid #999"></div>
<div class="abs" style="left:4px;top:664.5px;width:972px;height:22px;background:linear-gradient(#c4c4c4,#d6d6d6 30%,#d0d0d0);border-top:1px solid #9c9c9c"></div>
<span class="t" style="left:7px;top:668px;font-size:14px">80 items, Free space: 25.1 GB</span>
</div>
<div id="wf" style="left:636px;top:329px">
<div class="abs" style="left:0;top:0;width:866px;height:29px;border-radius:7px 7px 0 0;background:linear-gradient(#4a0000 0,#8e0606 1.5px,#840000 5px,#6c0000 19px,#760000 26px,#640000 29px)"></div>
<div class="abs" style="left:11px;top:9px;width:13px;height:12px;background:linear-gradient(#fff,#dcdcdc);border:1px solid #111;border-top:2px solid #1e2c48"></div>
<span class="wtitle" style="left:300px;top:5px;width:202px;letter-spacing:.6px;color:#fff;text-shadow:1px 1px 1px #200000">The Widget Factory</span>
<div class="abs" style="left:769px;top:4px;width:28px;height:21px;border:1px solid #c89a9a;border-radius:2px;background:linear-gradient(rgba(255,255,255,.06),rgba(0,0,0,.05))"></div>
<div class="abs" style="left:801px;top:4px;width:28px;height:21px;border:1px solid #c89a9a;border-radius:2px;background:linear-gradient(rgba(255,255,255,.06),rgba(0,0,0,.05))"></div>
<div class="abs" style="left:833px;top:4px;width:28px;height:21px;border:1px solid #c89a9a;border-radius:2px;background:linear-gradient(rgba(255,255,255,.06),rgba(0,0,0,.05))"></div>
<div class="abs" style="left:778px;top:16px;width:9px;height:2px;background:#fff"></div>
<div class="abs" style="left:810.5px;top:9.5px;width:9px;height:9px;border:1.5px solid #fff;border-top:2.5px solid #fff"></div>
<svg class="abs" style="left:842px;top:9px" width="10" height="10" viewBox="0 0 10 10"><path d="M1.2 1.2 L8.8 8.8 M8.8 1.2 L1.2 8.8" stroke="#fff" stroke-width="2.2"/></svg>
<div class="abs" style="left:4px;top:29px;width:858px;height:25px;background:linear-gradient(#dcdcdc,#cdcdcd);border-bottom:1px solid #ababab"></div>
<span class="t" style="left:13px;top:35px;font-size:14px">Theme</span>
<div class="abs" style="left:4px;top:54px;width:858px;height:40px;background:linear-gradient(#ebebeb,#e2e2e2 50%,#d9d9d9);border-bottom:1px solid #a8a8a8"></div>
<div class="abs" style="left:4px;top:54px;width:10px;height:39px;background:linear-gradient(#d0d0d0,#c2c2c2)"></div>
<div class="abs" style="left:6px;top:70px;width:6px;height:8px;background:repeating-linear-gradient(#8a8a8a 0,#8a8a8a 1px,transparent 1px,transparent 3px)"></div>
<svg class="abs" style="left:23px;top:65px" width="22" height="18" viewBox="0 0 22 18"><defs><linearGradient id="arR2" x1="0" y1="0" x2="0" y2="1"><stop offset="0" stop-color="#a01414"/><stop offset="1" stop-color="#560000"/></linearGradient></defs><path d="M1.4 1 V17" stroke="#4a0000" stroke-width="2.2"/><path d="M3.6 9 L11.6 1.6 L10.2 6 H21 V12 H10.2 L11.6 16.4Z" fill="url(#arR2)" stroke="#4a0000" stroke-width=".8" stroke-linejoin="round"/></svg>
<svg class="abs" style="left:61.5px;top:65px" width="22" height="18" viewBox="0 0 22 18"><path d="M20.6 1 V17" stroke="#4a0000" stroke-width="2.2"/><path d="M18.4 9 L10.4 1.6 L11.8 6 H1 V12 H11.8 L10.4 16.4Z" fill="url(#arR2)" stroke="#4a0000" stroke-width=".8" stroke-linejoin="round"/></svg>
<div class="abs" style="left:96px;top:62px;width:1px;height:24px;background:#b0b0b0;box-shadow:1px 0 0 #f2f2f2"></div>
<div class="abs" style="left:105px;top:57px;width:34px;height:34px;border-radius:6px;background:linear-gradient(#a6a6a6,#b6b6b6);border:1px solid #858585"></div>
<svg class="abs" style="left:113px;top:66px" width="18" height="18" viewBox="0 0 18 18"><path d="M7.6 1 H10.4 V7.6 H17 V10.4 H10.4 V17 H7.6 V10.4 H1 V7.6 H7.6Z" fill="#e0e0e0" stroke="#6e6e6e" stroke-width=".9"/></svg>
<div class="ent" style="left:18px;top:108px;width:212px;height:25px"></div>
<div class="abs" style="left:202px;top:109px;width:27px;height:23px;border-radius:0 5px 5px 0;background:linear-gradient(#f6f6f6,#e0e0e0);border-left:1px solid #8e8e8e"></div>
<div class="tri" style="left:211.0px;top:116.9px;border-top-color:#000"></div>
<span class="t" style="left:22.6px;top:113.5px;font-size:14px">ComboBoxEntry</span>
<div class="ent dis" style="left:18px;top:140px;width:212px;height:25px"></div>
<div class="abs" style="left:202px;top:141px;width:27px;height:23px;border-radius:0 5px 5px 0;background:none;border-left:1px solid #aaa"></div>
<div class="tri" style="left:211.0px;top:148.9px;border-top-color:#9a9a9a"></div>
<span class="t dis" style="left:22.6px;top:145.5px;font-size:14px">ComboBoxEntry</span>
<div class="ent" style="left:18px;top:181px;width:212px;height:25px"></div>
<div class="abs" style="left:204px;top:182px;width:25px;height:23px;border-radius:0 5px 5px 0;background:linear-gradient(#f6f6f6,#e0e0e0);border-left:1px solid #8e8e8e"></div>
<div class="tri" style="left:212.0px;top:189.9px;border-top-color:#000"></div>
<span class="t" style="left:22.6px;top:186.5px;font-size:14px">GtkCombo</span>
<div class="ent dis" style="left:18px;top:213px;width:212px;height:25px"></div>
<div class="abs" style="left:204px;top:214px;width:25px;height:23px;border-radius:0 5px 5px 0;background:linear-gradient(#ececec,#dcdcdc);border-left:1px solid #aaa"></div>
<div class="tri" style="left:212.0px;top:221.9px;border-top-color:#000"></div>
<span class="t dis" style="left:22.6px;top:218.5px;font-size:14px">GtkCombo (Disabled)</span>
<div class="ent" style="left:18px;top:254px;width:212px;height:25px"></div>
<span class="t" style="left:22.6px;top:259.5px;font-size:14px">GtkEntry</span>
<div class="ent dis" style="left:18px;top:286px;width:212px;height:25px"></div>
<span class="t dis" style="left:22.6px;top:291.5px;font-size:14px">GtkEntry</span>
<div class="ent" style="left:41px;top:327px;width:56px;height:25px"></div>
<div class="abs" style="left:81px;top:328px;width:15px;height:23px;border-radius:0 5px 5px 0;background:linear-gradient(#f4f4f4,#e0e0e0);border-left:1px solid #8e8e8e"></div>
<div class="abs" style="left:84.5px;top:331px;width:0;height:0;border-left:3.5px solid transparent;border-right:3.5px solid transparent;border-bottom:6px solid #000"></div>
<div class="abs" style="left:84.5px;top:341px;width:0;height:0;border-left:3.5px solid transparent;border-right:3.5px solid transparent;border-top:6px solid #000"></div>
<span class="t" style="left:46px;top:332px;font-size:14px">1</span>
<div class="ent dis" style="left:150px;top:327px;width:56px;height:25px"></div>
<div class="abs" style="left:190px;top:328px;width:15px;height:23px;border-radius:0 5px 5px 0;background:none;border-left:1px solid #aaa"></div>
<div class="abs" style="left:193.5px;top:331px;width:0;height:0;border-left:3.5px solid transparent;border-right:3.5px solid transparent;border-bottom:6px solid #a4a4a4"></div>
<div class="abs" style="left:193.5px;top:341px;width:0;height:0;border-left:3.5px solid transparent;border-right:3.5px solid transparent;border-top:6px solid #a4a4a4"></div>
<span class="t dis" style="left:155px;top:332px;font-size:14px">1</span>
<div class="abs" style="left:20px;top:370.0px;width:13px;height:13px;border-radius:2.5px;background:#fff;border:1px solid #5a5a5a"></div>
<span class="t" style="left:36.6px;top:369.5px;font-size:14px;letter-spacing:.22px">checkbutton1</span>
<div class="abs" style="left:132px;top:370.0px;width:13px;height:13px;border-radius:50%;background:#fff;border:1px solid #5a5a5a"></div>
<span class="t" style="left:148px;top:369.5px;font-size:14px;letter-spacing:.28px">radiobutton1</span>
<div class="abs" style="left:20px;top:391.0px;width:13px;height:13px;border-radius:2.5px;background:#7a0000;border:1px solid #4a0000"></div>
<svg class="abs" style="left:20px;top:388.5px" width="15" height="16" viewBox="0 0 15 16"><path d="M3 8.6 L5.8 12.4 L12.4 1.8" fill="none" stroke="#fff" stroke-width="2.4" stroke-linecap="round" stroke-linejoin="round"/></svg>
<span class="t" style="left:36.6px;top:390.5px;font-size:14px;letter-spacing:.22px">checkbutton2</span>
<div class="abs" style="left:132px;top:391.0px;width:13px;height:13px;border-radius:50%;background:#fff;border:3px solid #5c0000"></div>
<span class="t" style="left:148px;top:390.5px;font-size:14px;letter-spacing:.28px">radiobutton2</span>
<div class="abs" style="left:20px;top:412.0px;width:13px;height:13px;border-radius:2.5px;background:#dcdcdc;border:1px solid #a8a8a8"></div>
<span class="t dis" style="left:36.6px;top:411.5px;font-size:14px;letter-spacing:.22px">checkbutton3</span>
<div class="abs" style="left:132px;top:412.0px;width:13px;height:13px;border-radius:50%;background:#dcdcdc;border:1px solid #a8a8a8"></div>
<span class="t dis" style="left:148px;top:411.5px;font-size:14px;letter-spacing:.28px">radiobutton3</span>
<div class="abs" style="left:20px;top:433.0px;width:13px;height:13px;border-radius:2.5px;background:#dcdcdc;border:1px solid #a8a8a8"></div>
<svg class="abs" style="left:20px;top:430.5px" width="15" height="16" viewBox="0 0 15 16"><path d="M3 8.6 L5.8 12.4 L12.4 1.8" fill="none" stroke="#a0a0a0" stroke-width="2.2" stroke-linecap="round" stroke-linejoin="round"/></svg>
<span class="t dis" style="left:36.6px;top:432.5px;font-size:14px;letter-spacing:.22px">checkbutton4</span>
<div class="abs" style="left:132px;top:433.0px;width:13px;height:13px;border-radius:50%;background:#dcdcdc;border:1px solid #a8a8a8"></div>
<div class="abs" style="left:135.5px;top:436.5px;width:6px;height:6px;border-radius:50%;background:#a4a4a4"></div>
<span class="t dis" style="left:148px;top:432.5px;font-size:14px;letter-spacing:.28px">radiobutton4</span>
<div class="abs" style="left:250.5px;top:100px;width:1px;height:356px;background:#b0b0b0;box-shadow:1px 0 0 #e6e6e6"></div>
<div class="abs" style="left:405.5px;top:100px;width:1px;height:356px;background:#b0b0b0;box-shadow:1px 0 0 #e6e6e6"></div>
<div class="abs" style="left:581.5px;top:100px;width:1px;height:356px;background:#b0b0b0;box-shadow:1px 0 0 #e6e6e6"></div>
<div class="btn" style="left:272px;top:108px;width:113px;height:27px"></div>
<span class="t" style="left:272px;top:114.5px;width:113px;text-align:center;font-size:14px">button1</span>
<div class="btn dis" style="left:272px;top:142px;width:113px;height:27px"></div>
<span class="t dis" style="left:272px;top:148.5px;width:113px;text-align:center;font-size:14px">button2</span>
<div class="btn prs" style="left:272px;top:185px;width:113px;height:27px"></div>
<span class="t" style="left:272px;top:191.5px;width:113px;text-align:center;font-size:14px"><span style="letter-spacing:.4px">togglebutton1</span></span>
<div class="btn dis" style="left:272px;top:219px;width:113px;height:27px"></div>
<span class="t dis" style="left:272px;top:225.5px;width:113px;text-align:center;font-size:14px"><span style="letter-spacing:.4px">togglebutton2</span></span>
<div class="btn" style="left:272px;top:262px;width:113px;height:29px"></div>
<span class="t" style="left:278.5px;top:269.5px;font-size:14px">ComboBox</span>
<div class="tri" style="left:367px;top:272.5px;border-top-color:#000"></div>
<div class="btn dis" style="left:272px;top:298px;width:113px;height:29px"></div>
<span class="t dis" style="left:278.5px;top:305.5px;font-size:14px">ComboBox</span>
<div class="tri" style="left:367px;top:308.5px;border-top-color:#9a9a9a"></div>
<div class="btn" style="left:272px;top:343px;width:113px;height:27px"></div>
<span class="t" style="left:280px;top:349.5px;font-size:14px">OptionMenu</span>
<div class="tri" style="left:367px;top:352.5px;border-top-color:#000"></div>
<div class="btn dis" style="left:272px;top:377px;width:113px;height:27px"></div>
<span class="t dis" style="left:280px;top:383.5px;font-size:14px">OptionMenu</span>
<div class="tri" style="left:367px;top:386.5px;border-top-color:#9a9a9a"></div>
<div class="abs" style="left:420px;top:101px;width:148px;height:18px;background:linear-gradient(#d2d2d2,#cacaca 50%,#c2c2c2 50%,#cccccc);border:1px solid #a8a8a8"></div>
<div class="abs" style="left:420px;top:101px;width:74px;height:18px;background:linear-gradient(#a44444,#b06060 48%,#6e0000 50%,#6a0000);border:1px solid #5a0000"></div>
<div class="abs" style="left:420px;top:124px;width:148px;height:18px;background:linear-gradient(#d2d2d2,#cacaca 50%,#c2c2c2 50%,#cccccc);border:1px solid #a8a8a8"></div>
<div class="abs" style="left:494px;top:124px;width:74px;height:18px;background:linear-gradient(#a44444,#b06060 48%,#6e0000 50%,#6a0000);border:1px solid #5a0000"></div>
<div class="abs" style="left:446px;top:147px;width:20px;height:78px;background:linear-gradient(90deg,#d2d2d2,#cacaca 50%,#c2c2c2 50%,#cccccc);border:1px solid #a8a8a8"></div>
<div class="abs" style="left:446px;top:186px;width:20px;height:39px;background:linear-gradient(90deg,#a44444,#b06060 48%,#6e0000 50%,#6a0000);border:1px solid #5a0000"></div>
<div class="abs" style="left:521px;top:147px;width:20px;height:78px;background:linear-gradient(90deg,#d2d2d2,#cacaca 50%,#c2c2c2 50%,#cccccc);border:1px solid #a8a8a8"></div>
<div class="abs" style="left:521px;top:147px;width:20px;height:39px;background:linear-gradient(90deg,#a44444,#b06060 48%,#6e0000 50%,#6a0000);border:1px solid #5a0000"></div>
<div class="abs" style="left:434px;top:233.5px;width:119px;height:6px;border-radius:3px;background:linear-gradient(#a8a8a8,#c4c4c4);box-shadow:0 1px 0 #e8e8e8"></div>
<div class="abs" style="left:434px;top:233.5px;width:58px;height:6px;border-radius:3px;background:linear-gradient(#5a0000,#7a0000)"></div>
<div class="abs" style="left:488px;top:230.0px;width:21px;height:13px;border-radius:3px;background:linear-gradient(#e0e0e0,#a8a8a8);border:1px solid #6a6a6a"></div>
<div class="abs" style="left:494.5px;top:233.5px;width:8px;height:6px;background:repeating-linear-gradient(90deg,#6a6a6a 0,#6a6a6a 1px,transparent 1px,transparent 3.3px)"></div>
<div class="abs" style="left:434px;top:254.5px;width:119px;height:6px;border-radius:3px;background:linear-gradient(#a8a8a8,#c4c4c4);box-shadow:0 1px 0 #e8e8e8"></div>
<div class="abs" style="left:494px;top:254.5px;width:59px;height:6px;border-radius:3px;background:linear-gradient(#5a0000,#7a0000)"></div>
<div class="abs" style="left:484px;top:251.0px;width:21px;height:13px;border-radius:3px;background:linear-gradient(#e0e0e0,#a8a8a8);border:1px solid #6a6a6a"></div>
<div class="abs" style="left:490.5px;top:254.5px;width:8px;height:6px;background:repeating-linear-gradient(90deg,#6a6a6a 0,#6a6a6a 1px,transparent 1px,transparent 3.3px)"></div>
<div class="abs" style="left:453.3px;top:283.5px;width:6px;height:118px;border-radius:3px;background:linear-gradient(90deg,#a8a8a8,#c4c4c4);box-shadow:1px 0 0 #e8e8e8"></div>
<div class="abs" style="left:453.3px;top:283.5px;width:6px;height:52.5px;border-radius:3px;background:linear-gradient(90deg,#5a0000,#7a0000)"></div>
<div class="abs" style="left:449.8px;top:332px;width:13px;height:21px;border-radius:3px;background:linear-gradient(90deg,#e0e0e0,#a8a8a8);border:1px solid #6a6a6a"></div>
<div class="abs" style="left:453.3px;top:338.5px;width:6px;height:8px;background:repeating-linear-gradient(#6a6a6a 0,#6a6a6a 1px,transparent 1px,transparent 3.3px)"></div>
<div class="abs" style="left:528.3px;top:283.5px;width:6px;height:118px;border-radius:3px;background:linear-gradient(90deg,#a8a8a8,#c4c4c4);box-shadow:1px 0 0 #e8e8e8"></div>
<div class="abs" style="left:528.3px;top:343.5px;width:6px;height:58.0px;border-radius:3px;background:linear-gradient(90deg,#5a0000,#7a0000)"></div>
<div class="abs" style="left:524.8px;top:333.5px;width:13px;height:21px;border-radius:3px;background:linear-gradient(90deg,#e0e0e0,#a8a8a8);border:1px solid #6a6a6a"></div>
<div class="abs" style="left:528.3px;top:340.0px;width:6px;height:8px;background:repeating-linear-gradient(#6a6a6a 0,#6a6a6a 1px,transparent 1px,transparent 3.3px)"></div>
<div class="abs" style="left:423px;top:422px;width:13px;height:13px;border-radius:2.5px;background:#7a0000;border:1px solid #4a0000"></div>
<svg class="abs" style="left:423px;top:419.5px" width="15" height="16" viewBox="0 0 15 16"><path d="M3 8.6 L5.8 12.4 L12.4 1.8" fill="none" stroke="#fff" stroke-width="2.4" stroke-linecap="round" stroke-linejoin="round"/></svg>
<span class="t" style="left:439.5px;top:421.5px;font-size:14px">Move In Harmony</span>
<div class="abs" style="left:601px;top:106px;width:227px;height:322px;background:#fff;border:1px solid #8e8e8e"></div>
<div class="abs" style="left:602px;top:107px;width:225px;height:25px;background:linear-gradient(#fdfdfd,#f2f2f2 55%,#e2e2e2);border-bottom:1px solid #b8b8b8"></div>
<div class="abs" style="left:666.5px;top:110px;width:1px;height:18px;background:#9a9a9a"></div>
<span class="t" style="left:605.5px;top:112px;font-size:14px">Column1</span>
<span class="t" style="left:670px;top:112px;font-size:14px">Column2</span>
<div class="abs" style="left:832px;top:106px;width:18px;height:322px;border-radius:5px;background:#cfcfcf;border:1px solid #a0a0a0"></div>
<div class="abs" style="left:837px;top:111px;width:0;height:0;border-left:4px solid transparent;border-right:4px solid transparent;border-bottom:8px solid #aaa"></div>
<div class="abs" style="left:833px;top:124px;width:16px;height:269px;border-radius:5px;background:linear-gradient(90deg,#fcfcfc,#e2e2e2);border:1px solid #9a9a9a"></div>
<div class="abs" style="left:837px;top:255px;width:8px;height:8px;background:repeating-linear-gradient(#8a8a8a 0,#8a8a8a 1px,transparent 1px,transparent 3px)"></div>
<div class="abs" style="left:837px;top:400px;width:0;height:0;border-left:4px solid transparent;border-right:4px solid transparent;border-bottom:8px solid #aaa"></div>
<div class="abs" style="left:837px;top:414px;width:0;height:0;border-left:4px solid transparent;border-right:4px solid transparent;border-top:8px solid #aaa"></div>
<div class="abs" style="left:601px;top:431.5px;width:227px;height:18px;border-radius:5px;background:#cfcfcf;border:1px solid #a0a0a0"></div>
<div class="abs" style="left:606px;top:436.5px;width:0;height:0;border-top:4px solid transparent;border-bottom:4px solid transparent;border-right:8px solid #aaa"></div>
<div class="abs" style="left:618.5px;top:432.5px;width:176px;height:16px;border-radius:5px;background:linear-gradient(#fcfcfc,#e2e2e2);border:1px solid #9a9a9a"></div>
<div class="abs" style="left:702px;top:436.5px;width:8px;height:8px;background:repeating-linear-gradient(90deg,#8a8a8a 0,#8a8a8a 1px,transparent 1px,transparent 3px)"></div>
<div class="abs" style="left:800px;top:436.5px;width:0;height:0;border-top:4px solid transparent;border-bottom:4px solid transparent;border-right:8px solid #aaa"></div>
<div class="abs" style="left:815px;top:436.5px;width:0;height:0;border-top:4px solid transparent;border-bottom:4px solid transparent;border-left:8px solid #aaa"></div>
<div class="abs" style="left:10px;top:468.5px;width:846px;height:1px;background:#b0b0b0;box-shadow:0 1px 0 #e6e6e6"></div>
<div class="abs" style="left:10px;top:491px;width:175px;height:51px;border-radius:4px;background:#d0d0d0;border:1px solid #a2a2a2;box-shadow:inset 0 0 0 0 #fff"></div>
<span class="t" style="left:13px;top:483px;font-size:14px;font-weight:bold;background:#d6d6d6;padding:0 2px 0 2px;letter-spacing:.85px">Frame (Shadow in)</span>
<div class="abs" style="left:188px;top:491px;width:186px;height:51px;border-radius:4px;background:#dadada;border:1px solid #a2a2a2;box-shadow:inset 0 0 0 0 #fff"></div>
<span class="t" style="left:191px;top:483px;font-size:14px;font-weight:bold;background:#d6d6d6;padding:0 2px 0 2px;letter-spacing:.85px">Frame (Shadow out)</span>
<div class="abs" style="left:377px;top:491px;width:231px;height:51px;border-radius:4px;background:#d0d0d0;border:1px solid #a2a2a2;box-shadow:inset 0 0 0 0 #fff"></div>
<span class="t" style="left:380px;top:483px;font-size:14px;font-weight:bold;background:#d6d6d6;padding:0 2px 0 2px;letter-spacing:.85px">Frame (Shadow etched in)</span>
<div class="abs" style="left:611px;top:491px;width:245px;height:51px;border-radius:4px;background:#dadada;border:1px solid #a2a2a2;box-shadow:inset 0 0 0 0 #fff"></div>
<span class="t" style="left:614px;top:483px;font-size:14px;font-weight:bold;background:#d6d6d6;padding:0 2px 0 2px;letter-spacing:.85px">Frame (Shadow etched out)</span>
<div class="abs" style="left:11px;top:584px;width:250px;height:29px;border-radius:0 4px 4px 4px;background:#e2e2e2;border:1px solid #a2a2a2"></div>
<div class="abs" style="left:55px;top:558px;width:44px;height:27px;border-radius:4px 4px 0 0;background:linear-gradient(#e0e0e0,#d6d6d6);border:1px solid #a2a2a2;"></div>
<span class="t" style="left:55px;top:564.0px;width:44px;text-align:center;font-size:14px;color:#3a3a3a">tab2</span>
<div class="abs" style="left:98px;top:558px;width:44px;height:27px;border-radius:4px 4px 0 0;background:linear-gradient(#e0e0e0,#d6d6d6);border:1px solid #a2a2a2;"></div>
<span class="t" style="left:98px;top:564.0px;width:44px;text-align:center;font-size:14px;color:#3a3a3a">tab3</span>
<div class="abs" style="left:11px;top:555px;width:45px;height:30px;border-radius:5px 5px 0 0;background:linear-gradient(#e8c8c8,#e4e0e0 60%,#e2e2e2);border:1px solid #8a2020;border-bottom-color:#e2e2e2;border-top-color:#8e1c1c;border-left-color:#b48c8c;border-right-color:#b48c8c;background:linear-gradient(#e6c4c4,#e3dcdc 45%,#e2e2e2);"></div>
<span class="t" style="left:11px;top:562.5px;width:45px;text-align:center;font-size:14px;color:#111">tab1</span>
<div class="abs" style="left:266px;top:555px;width:250px;height:29px;border-radius:4px 4px 4px 0;background:#e2e2e2;border:1px solid #a2a2a2"></div>
<div class="abs" style="left:310px;top:583px;width:44px;height:27px;border-radius:0 0 4px 4px;background:linear-gradient(#e0e0e0,#d6d6d6);border:1px solid #a2a2a2;"></div>
<span class="t" style="left:310px;top:589.0px;width:44px;text-align:center;font-size:14px;color:#3a3a3a">tab2</span>
<div class="abs" style="left:353px;top:583px;width:44px;height:27px;border-radius:0 0 4px 4px;background:linear-gradient(#e0e0e0,#d6d6d6);border:1px solid #a2a2a2;"></div>
<span class="t" style="left:353px;top:589.0px;width:44px;text-align:center;font-size:14px;color:#3a3a3a">tab3</span>
<div class="abs" style="left:266px;top:583px;width:45px;height:30px;border-radius:0 0 5px 5px;background:linear-gradient(#e8c8c8,#e4e0e0 60%,#e2e2e2);border:1px solid #8a2020;border-top-color:#e2e2e2;border-bottom-color:#8e1c1c;border-left-color:#b48c8c;border-right-color:#b48c8c;background:linear-gradient(#e2e2e2,#e3dcdc 55%,#e6c4c4);"></div>
<span class="t" style="left:266px;top:590.5px;width:45px;text-align:center;font-size:14px;color:#111">tab1</span>
<div class="abs" style="left:562px;top:555px;width:123px;height:58px;border-radius:0 4px 4px 4px;background:#e2e2e2;border:1px solid #a2a2a2"></div>
<div class="abs" style="left:524px;top:586px;width:40px;height:33px;border-radius:4px 0 0 4px;background:linear-gradient(#e0e0e0,#d6d6d6);border:1px solid #a2a2a2;"></div>
<span class="t" style="left:524px;top:595.0px;width:40px;text-align:center;font-size:14px;color:#3a3a3a">tab2</span>
<div class="abs" style="left:521px;top:555px;width:42px;height:33px;border-radius:5px 0 0 5px;background:linear-gradient(#e8c8c8,#e4e0e0 60%,#e2e2e2);border:1px solid #8a2020;border-right-color:#e2e2e2;border-left-color:#8e1c1c;border-top-color:#b48c8c;border-bottom-color:#b48c8c;background:linear-gradient(90deg,#e6c4c4,#e3dcdc 45%,#e2e2e2);"></div>
<span class="t" style="left:521px;top:564.0px;width:42px;text-align:center;font-size:14px;color:#111">tab1</span>
<div class="abs" style="left:690px;top:555px;width:124px;height:58px;border-radius:4px 0 4px 4px;background:#e2e2e2;border:1px solid #a2a2a2"></div>
<div class="abs" style="left:813px;top:586px;width:39px;height:33px;border-radius:0 4px 4px 0;background:linear-gradient(#e0e0e0,#d6d6d6);border:1px solid #a2a2a2;"></div>
<span class="t" style="left:813px;top:595.0px;width:39px;text-align:center;font-size:14px;color:#3a3a3a">tab2</span>
<div class="abs" style="left:813px;top:555px;width:42px;height:33px;border-radius:0 5px 5px 0;background:linear-gradient(#e8c8c8,#e4e0e0 60%,#e2e2e2);border:1px solid #8a2020;border-left-color:#e2e2e2;border-right-color:#8e1c1c;border-top-color:#b48c8c;border-bottom-color:#b48c8c;background:linear-gradient(270deg,#e6c4c4,#e3dcdc 45%,#e2e2e2);"></div>
<span class="t" style="left:813px;top:564.0px;width:42px;text-align:center;font-size:14px;color:#111">tab1</span>
<div class="abs" style="left:4px;top:618.5px;width:858px;height:22.5px;background:linear-gradient(#cfcfcf,#d8d8d8 30%,#d2d2d2);border-top:1px solid #a4a4a4"></div>
<svg class="abs" style="left:849px;top:628px" width="13" height="13" viewBox="0 0 13 13"><path d="M12.5 .5 V12.5 H.5Z" fill="#aaa" stroke="#8a8a8a" stroke-width=".6"/></svg>
</div>
<div id="tp">
<svg class="abs" style="left:8px;top:1px" width="22" height="22" viewBox="0 0 22 22"><defs><radialGradient id="uselg" cx=".4" cy=".45" r=".6"><stop offset="0" stop-color="#c41a1a"/><stop offset="1" stop-color="#6e0606"/></radialGradient></defs><circle cx="11.4" cy="11.4" r="5.4" fill="none" stroke="url(#uselg)" stroke-width="4.2"/><g fill="url(#uselg)"><circle cx="8.6" cy="3.6" r="2.7"/><circle cx="4" cy="17.6" r="3.1"/><circle cx="18.4" cy="15.8" r="2.9"/><circle cx="14.8" cy="6.2" r="1.4"/></g><path d="M13 8 L15.6 5.2" stroke="#737373" stroke-width="1"/></svg>
<span class="t" style="left:35px">Applications</span>
<span class="t" style="left:128px">Places</span>
<span class="t" style="left:185px">System</span>
<!-- firefox -->
<svg class="abs" style="left:241px;top:1px" width="23" height="22" viewBox="0 0 23 22"><defs><radialGradient id="ffg" cx=".5" cy=".3" r=".7"><stop offset="0" stop-color="#a8dcf8"/><stop offset=".45" stop-color="#3a80c8"/><stop offset="1" stop-color="#0c1c50"/></radialGradient><linearGradient id="fff" x1="0" y1="0" x2="1" y2="1"><stop offset="0" stop-color="#f08a20"/><stop offset=".6" stop-color="#e8641a"/><stop offset="1" stop-color="#d83a10"/></linearGradient></defs><circle cx="12.4" cy="10" r="8.6" fill="url(#ffg)"/><path d="M3.4 3.6 C1.6 6 1 9 1.6 12.4 C2.6 17.8 7 21.4 12.4 21.4 C18 21.4 22 17.2 22 11.6 C22 8.6 20.8 6 19 4.4 C20 6.6 20 8.8 19 10.4 C18.6 13.6 16.4 15.6 13.4 15.8 C10.4 16 8.6 14.4 9.4 12.6 C7.6 12.6 6.2 11.6 6.4 10 C5 9 5 7 6.2 5.8 C4.8 5.4 3.8 4.6 3.4 3.6Z" fill="url(#fff)"/><path d="M19 4.4 C20.8 6 22 8.6 22 11.6 C22 17.2 18 21.4 12.4 21.4 C16.6 20.4 19.8 17 20.4 12.6 C20.8 9.6 20.2 6.8 19 4.4Z" fill="#f8c828"/><path d="M9.4 12.6 C10.6 12.2 12 12.4 13 11.6 C11.6 11.2 10.4 11 9.4 11.2Z" fill="#1a2a60"/></svg>
<!-- terminal -->
<svg class="abs" style="left:264px;top:2px" width="23" height="20" viewBox="0 0 23 20"><defs><linearGradient id="tms" x1="0" y1="1" x2="1" y2="0"><stop offset="0" stop-color="#1e2a18"/><stop offset=".5" stop-color="#34442a"/><stop offset="1" stop-color="#56683e"/></linearGradient></defs><rect x="1" y="1" width="20.6" height="18" rx="2" fill="#b4b4ac" stroke="#8c8c86" stroke-width=".8"/><rect x="2.8" y="2.6" width="17" height="12.8" fill="url(#tms)" stroke="#0c1408" stroke-width=".8"/><path d="M4.6 6.2 L9.4 8.4 L4.6 10.6" fill="none" stroke="#e8f0e0" stroke-width="1.5"/><path d="M9.2 12.8 H14" stroke="#e8f0e0" stroke-width="1.5"/><rect x="14.4" y="16.6" width="2.4" height="1.2" fill="#5aa040"/><rect x="17.6" y="16.6" width="2" height="1.2" fill="#9a9a94"/></svg>
<!-- keys -->
<svg class="abs" style="left:287px;top:3px" width="24" height="18" viewBox="0 0 24 18"><circle cx="7" cy="9" r="5" fill="none" stroke="#e89020" stroke-width="3"/><circle cx="7" cy="9" r="2.6" fill="#e8e0d0"/><path d="M11 8 L17 8 L17 4.6 L23 9 L17 13.4 L17 10.4 L11 10.4Z" fill="#f0a020" stroke="#c07010" stroke-width=".6"/><path d="M10.4 11.4 L13.4 14.6" stroke="#b8b0a0" stroke-width="2.2"/></svg>
<!-- volume -->
<svg class="abs" style="left:1445px;top:3px" width="18" height="18" viewBox="0 0 18 18"><path d="M1 6.4 H5 L10.6 1.6 V16.4 L5 11.6 H1Z" fill="#c83232" stroke="#7a1010" stroke-width=".8"/><path d="M1.4 7 h3 v4 h-3z" fill="#f0d0d0" opacity=".7"/><path d="M2 7.4 l2.4 3.2 M4.4 7.4 L2 10.6" stroke="#901010" stroke-width=".8"/><path d="M12.6 5 V13 M14.6 3.6 V14.4 M16.4 5.6 V12.4" stroke="#555" stroke-width="1"/></svg>
<!-- chip + bar -->
<svg class="abs" style="left:1463px;top:1px" width="26" height="22" viewBox="0 0 26 22"><rect x="2" y="3.4" width="13" height="15.6" rx="1" fill="#6a7a50" stroke="#2a3018" stroke-width="1"/><g fill="#e8e0a0"><rect x="3.4" y="1.6" width="1.6" height="2.2"/><rect x="6.4" y="1.6" width="1.6" height="2.2"/><rect x="9.4" y="1.6" width="1.6" height="2.2"/><rect x="12.2" y="1.6" width="1.6" height="2.2"/><rect x="3.4" y="18.4" width="1.6" height="2.2"/><rect x="6.4" y="18.4" width="1.6" height="2.2"/><rect x="9.4" y="18.4" width="1.6" height="2.2"/><rect x="12.2" y="18.4" width="1.6" height="2.2"/><rect x=".4" y="6" width="2" height="1.6"/><rect x=".4" y="9" width="2" height="1.6"/><rect x=".4" y="12" width="2" height="1.6"/><rect x=".4" y="15" width="2" height="1.6"/></g><rect x="6" y="8" width="6" height="6.4" fill="#b0b8a0" stroke="#4a5238" stroke-width=".6"/><rect x="16.4" y="1.6" width="8" height="19" rx="1.4" fill="#fff" stroke="#222" stroke-width="1.2"/><rect x="17" y="10.4" width="6.8" height="9.6" fill="#8a86d8"/><rect x="17" y="6.6" width="6.8" height="1" fill="#bbb"/></svg>
<span class="t" style="left:1494px">Wed&nbsp; 5 Dec, 00:19</span>
<!-- cpu graph -->
<div class="abs" style="left:1615px;top:1px;width:42px;height:22px;border-radius:3px;background:#000;border:1px solid #c8d0d8;box-shadow:inset 0 -2px 0 #3a8ad0"></div>
<div class="abs" style="left:1618px;top:17px;width:3px;height:3px;background:#3a8ad0"></div>
<div class="abs" style="left:1622px;top:19px;width:32px;height:1px;background:#2a6aa8"></div>
<!-- power -->
<div class="abs" style="left:1659px;top:1px;width:21px;height:22px;background:linear-gradient(#5a0a0a,#3a0404);border:1px solid #2a0000"></div>
<svg class="abs" style="left:1660px;top:2px" width="20" height="20" viewBox="0 0 20 20"><path d="M6.2 5.4 A6.4 6.4 0 1 0 13.8 5.4" fill="none" stroke="#f4d0d0" stroke-width="2.6" stroke-linecap="round"/><path d="M10 2 V9.6" stroke="#f4d0d0" stroke-width="2.6" stroke-linecap="round"/></svg>
</div>

<div id="bp">
<!-- show desktop -->
<div class="abs" style="left:2px;top:1px;width:23px;height:22px;border-radius:4px;background:linear-gradient(#9a9a9a,#7a7a7a);border:1px solid #b4b4b4"></div>
<div class="abs" style="left:5px;top:4px;width:17px;height:16px;background:#8a0000;border:2px solid #f0e8e8;border-radius:2px;box-shadow:0 0 0 1px #5a0a0a"></div>
<div class="abs" style="left:9px;top:9px;width:5px;height:3px;background:#f0d0d0"></div>
<div class="abs" style="left:28px;top:6px;width:5px;height:11px;background:repeating-linear-gradient(#ddd 0,#ddd 1.4px,transparent 1.4px,transparent 4px)"></div>
<!-- terminal icon -->
<div class="abs" style="left:45px;top:4px;width:16px;height:14px;background:#c4c4bc;border:1px solid #777;border-radius:2px"></div>
<div class="abs" style="left:47px;top:6px;width:12px;height:9px;background:linear-gradient(#5a6a52,#3a4434)"></div>
<span class="t" style="left:69px;letter-spacing:.3px">Gnome-terminal (9)</span>
<div class="tri" style="left:209px;top:8px"></div>
<!-- vim icon -->
<div class="abs" style="left:234px;top:4px;width:15px;height:14px;background:#eef0f4;border:1px solid #222;border-top:3px solid #2a3a5a"></div>
<span class="t" style="left:257px">Vim (3)</span>
<div class="tri" style="left:397px;top:8px"></div>
<!-- firefox small -->
<svg class="abs" style="left:421px;top:4px" width="17" height="16" viewBox="0 0 23 22"><circle cx="12" cy="10.5" r="8.5" fill="#4a6ab0"/><path d="M2 9 C1 16 6 21.5 12.5 21.5 C18.5 21.5 22.5 17 22 11 C21.6 7.5 20 5 18 3.6 C19.4 6 19.4 8 18.6 9.6 C18 13 16 15.4 12.4 15.4 C9.6 15.4 8.4 13.6 9.4 12 C8 12 6.6 11 6.6 9.4 C5.4 8.4 5.4 6.4 6.4 5 C5 4.4 4 3 4 1.6 C2.4 3.6 1.6 6 2 9Z" fill="#d86a1a"/></svg>
<span class="t" style="left:445px;letter-spacing:.2px">[Ubuntu Satanic Edit...</span>
<!-- drive icon -->
<div class="abs" style="left:610px;top:4px;width:15px;height:16px;background:linear-gradient(#f4f4f4,#d8d8d8);border:1px solid #9a9a9a;border-radius:3px 3px 1px 1px"></div>
<div class="abs" style="left:613px;top:13px;width:9px;height:5px;background:repeating-linear-gradient(90deg,#777 0,#777 2px,#ddd 2px,#ddd 3px)"></div>
<span class="t" style="left:633px">garry - File Browser</span>
<!-- active task -->
<div class="abs" style="left:791px;top:3px;width:184px;height:22px;border-radius:5px 5px 0 0;background:linear-gradient(#dcdcdc,#c2c2c2);border:1px solid #9a9a9a;border-bottom:none"></div>
<div class="abs" style="left:798px;top:6px;width:15px;height:13px;background:#f4f6fa;border:1px solid #111;border-top:3px solid #1a2a4a"></div>
<span class="t" style="left:821px;top:5px;color:#000">The Widget Factory</span>
<!-- tray -->
<div class="abs" style="left:1444px;top:6px;width:6px;height:11px;background:repeating-linear-gradient(#ddd 0,#ddd 1.4px,transparent 1.4px,transparent 4px)"></div>
<div class="abs" style="left:1460px;top:3px;width:18px;height:18px;border-radius:2px;background:#f07a10"></div>
<svg class="abs" style="left:1460px;top:3px" width="18" height="18" viewBox="0 0 18 18"><g stroke="#fff4e0" stroke-width="1.6" stroke-linecap="round"><path d="M9 3 V15 M3 9 H15 M4.6 4.6 L13.4 13.4 M13.4 4.6 L4.6 13.4"/></g><circle cx="9" cy="9" r="2.4" fill="#fff"/></svg>
<svg class="abs" style="left:1487px;top:3px" width="19" height="20" viewBox="0 0 19 20"><rect x="4.6" y="1" width="12" height="9" fill="#111" stroke="#d8d8d0" stroke-width="1.2"/><rect x="1.4" y="5.6" width="12" height="9" fill="#111" stroke="#e8e8e0" stroke-width="1.2"/><rect x="5" y="15" width="5" height="1.6" fill="#ccc"/><rect x="3" y="17" width="9" height="1.4" fill="#222"/><rect x="13.6" y="10.4" width="3" height="1.4" fill="#ccc"/></svg>
<svg class="abs" style="left:1511px;top:1px" width="23" height="23" viewBox="0 0 23 23"><rect x="1.4" y="2" width="20" height="20" rx="2" fill="#fff" stroke="#1a7ae8" stroke-width="2.4"/><path d="M2.4 3 L11.4 13.4 L20.4 3" fill="none" stroke="#1a7ae8" stroke-width="3"/><path d="M3 21 L11.4 13.4 L20 21" fill="none" stroke="#c8d8e8" stroke-width="1"/></svg>
<!-- workspace switcher -->
<div class="abs" style="left:1538px;top:0;width:142px;height:24px;background:#999"></div>
<div class="abs" style="left:1538px;top:0;width:36px;height:24px;background:#470c0c"></div>
<div class="abs" style="left:1574px;top:0;width:1px;height:24px;background:#b0b0b0"></div>
<div class="abs" style="left:1609px;top:0;width:1px;height:24px;background:#b0b0b0"></div>
<div class="abs" style="left:1644px;top:0;width:1px;height:24px;background:#b0b0b0"></div>
<div class="abs" style="left:1543px;top:4px;width:20px;height:13px;background:#6a0000;border:1px solid #fff"></div>
<div class="abs" style="left:1552px;top:8px;width:18px;height:14px;background:#7e0000;border:1px solid #fff"></div>
<div class="abs" style="left:1581px;top:5px;width:17px;height:13px;background:#6e0000;border:1px solid #fff"></div>
</div>

</body>
</html>
